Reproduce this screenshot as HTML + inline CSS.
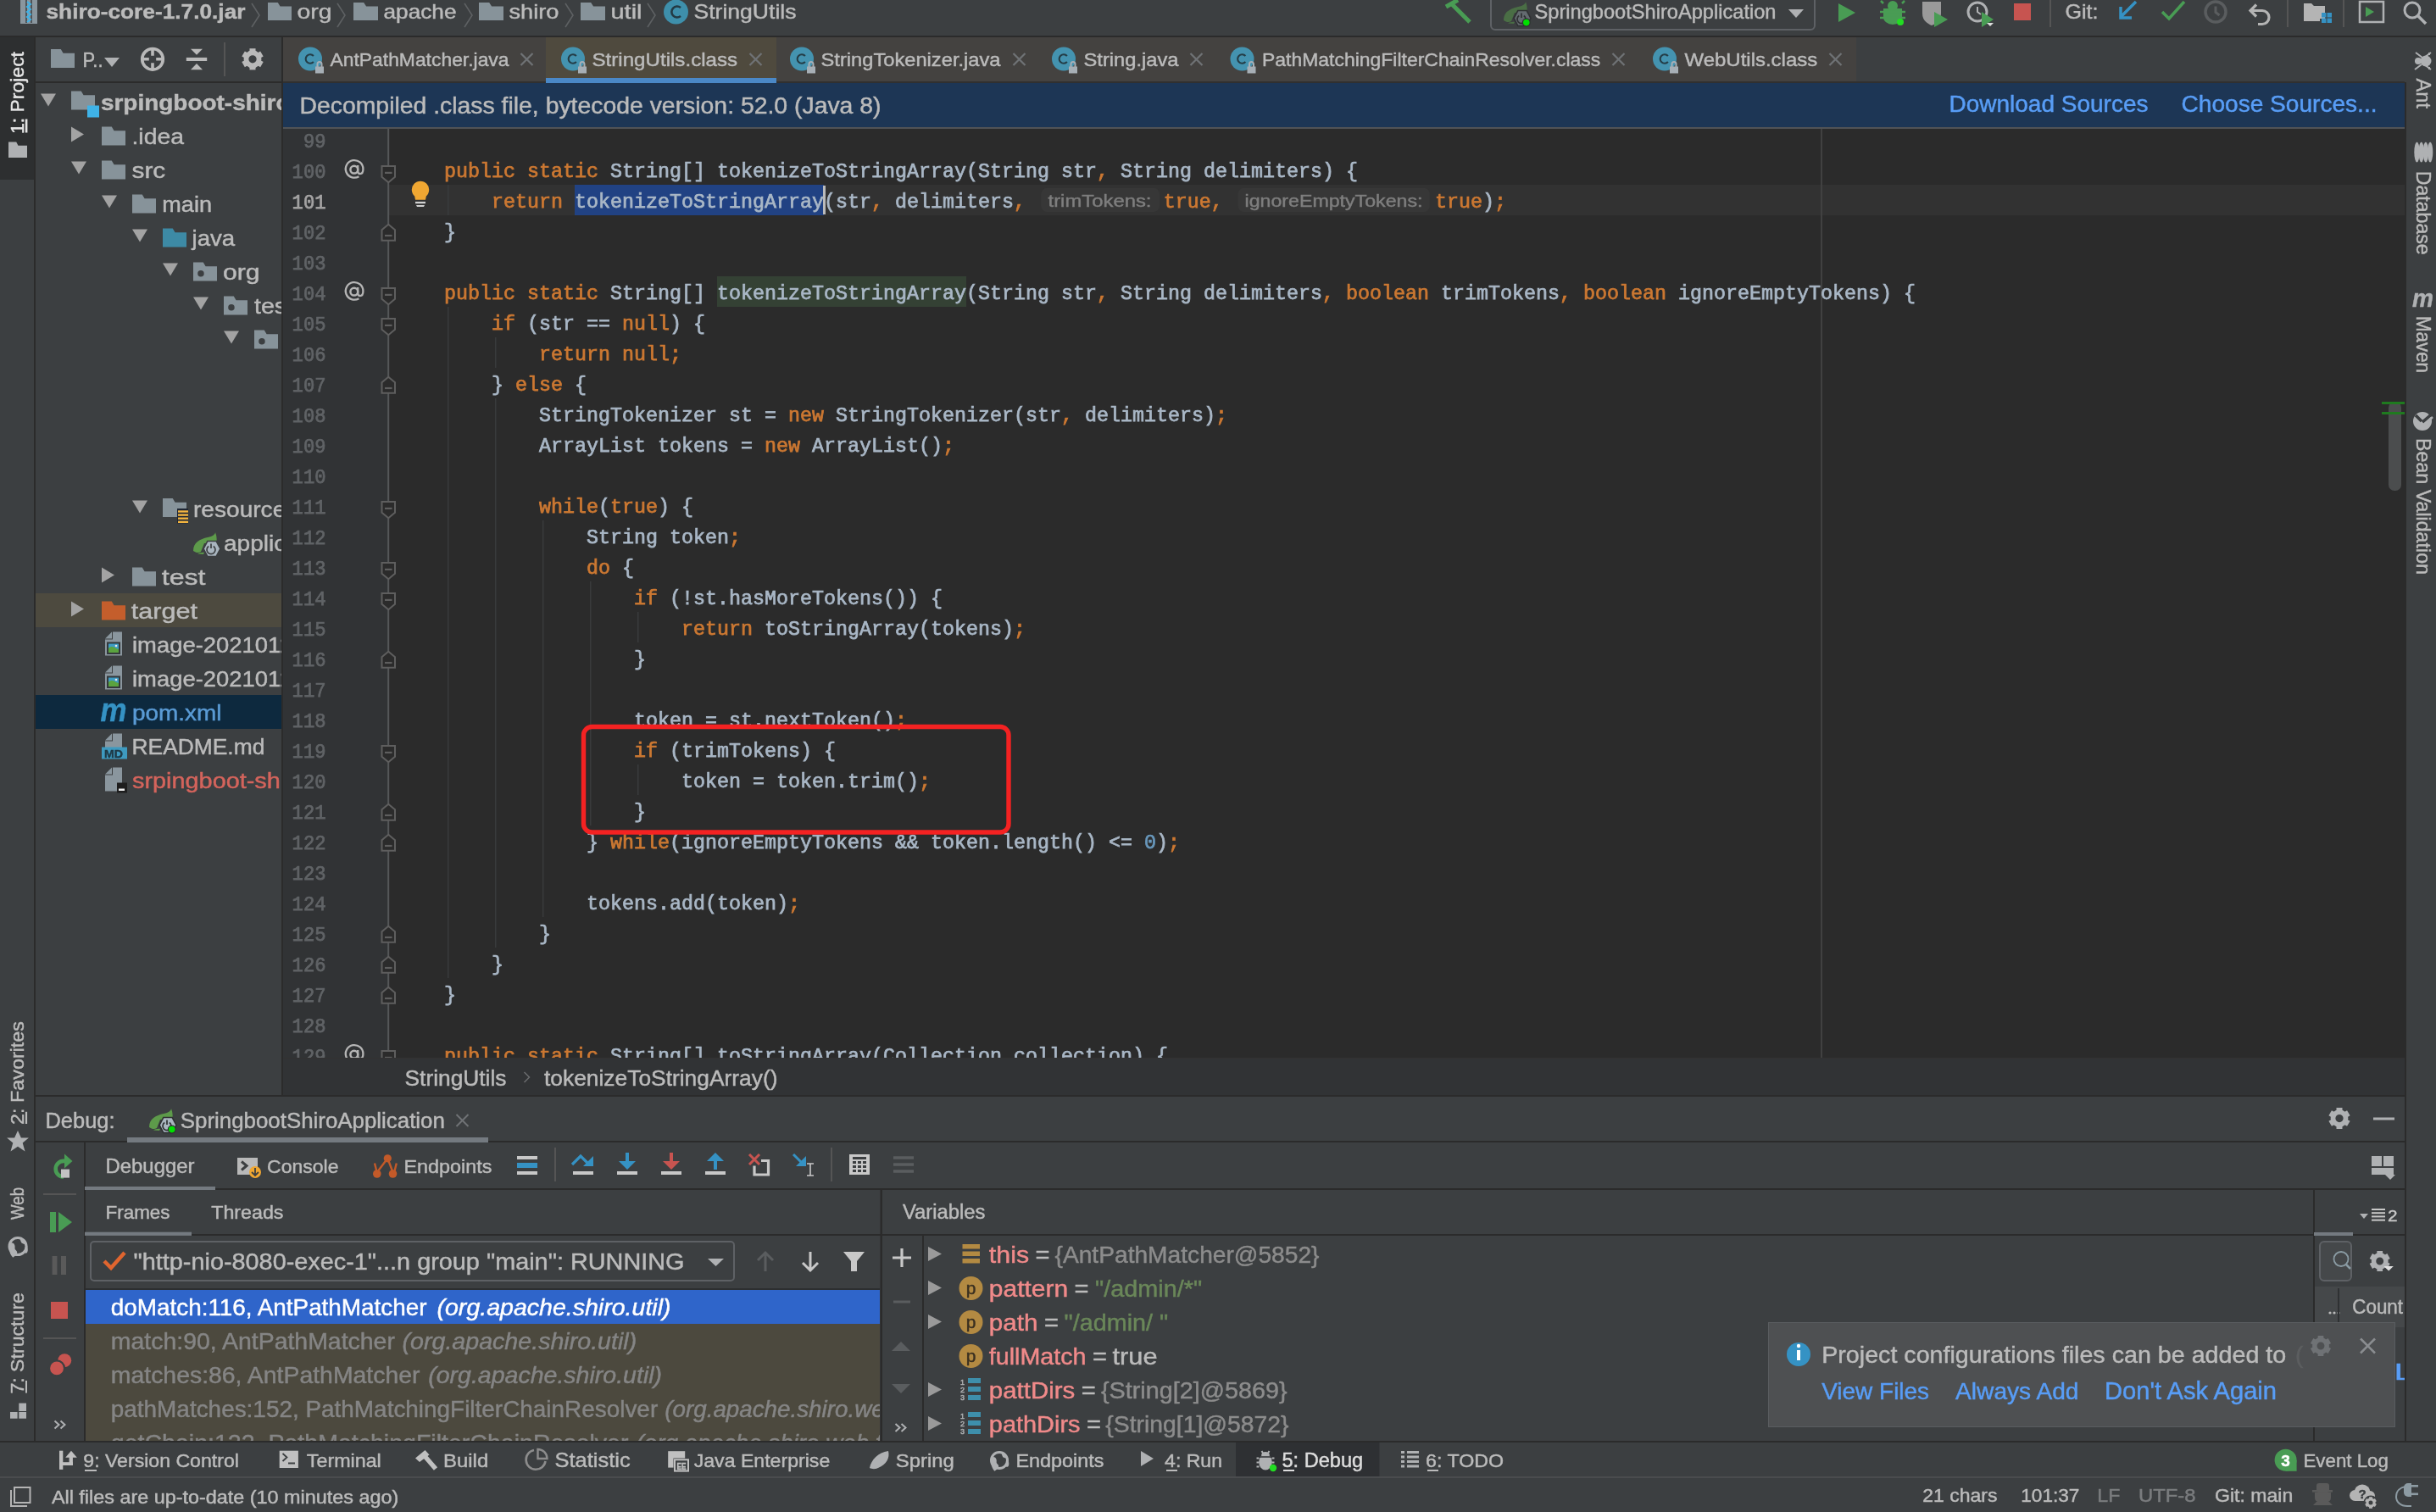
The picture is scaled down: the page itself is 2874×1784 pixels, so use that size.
<!DOCTYPE html><html><head><meta charset="utf-8"><style>html,body{margin:0;padding:0;background:#3c3f41;overflow:hidden}svg text{white-space:pre}</style></head><body><svg width="2874" height="1784" viewBox="0 0 2874 1784" style="display:block;will-change:transform"><rect x="0" y="0" width="2874" height="1784" fill="#3c3f41" />
<rect x="0" y="42" width="2874" height="2" fill="#2b2b2b" />
<rect x="24" y="0" width="20" height="28" fill="#8a969e" />
<path d="M31 0v27M37 0v27" fill="none" stroke="#3c3f41" stroke-width="1.5" />
<path d="M32 2l4 3l-4 3l4 3l-4 3l4 3l-4 3l4 3l-4 3" fill="none" stroke="#3fb3e8" stroke-width="2" />
<text x="54.5" y="22" font-size="24" fill="#bbbbbb" font-family="'Liberation Sans', sans-serif" textLength="235" lengthAdjust="spacingAndGlyphs" font-weight="bold" stroke="#bbbbbb" stroke-width="0.45" >shiro-core-1.7.0.jar</text>
<path d="M297 4l9 14l-9 14" fill="none" stroke="#5e6163" stroke-width="1.6" />
<path d="M316 3h11.76l2.8000000000000003 4.62h13.44v16.38h-28z" fill="#87939a" />
<text x="350.5" y="22" font-size="24" fill="#bbbbbb" font-family="'Liberation Sans', sans-serif" textLength="41" lengthAdjust="spacingAndGlyphs" stroke="#bbbbbb" stroke-width="0.45" >org</text>
<path d="M548 4l9 14l-9 14" fill="none" stroke="#5e6163" stroke-width="1.6" />
<path d="M398 4l9 14l-9 14" fill="none" stroke="#5e6163" stroke-width="1.6" />
<path d="M417 3h12.18l2.9000000000000004 4.62h13.92v16.38h-29z" fill="#87939a" />
<text x="452.5" y="22" font-size="24" fill="#bbbbbb" font-family="'Liberation Sans', sans-serif" textLength="86" lengthAdjust="spacingAndGlyphs" stroke="#bbbbbb" stroke-width="0.45" >apache</text>
<path d="M565 3h12.18l2.9000000000000004 4.62h13.92v16.38h-29z" fill="#87939a" />
<text x="600.5" y="22" font-size="24" fill="#bbbbbb" font-family="'Liberation Sans', sans-serif" textLength="59" lengthAdjust="spacingAndGlyphs" stroke="#bbbbbb" stroke-width="0.45" >shiro</text>
<path d="M667 4l9 14l-9 14" fill="none" stroke="#5e6163" stroke-width="1.6" />
<path d="M685 3h12.18l2.9000000000000004 4.62h13.92v16.38h-29z" fill="#87939a" />
<text x="720.5" y="22" font-size="24" fill="#bbbbbb" font-family="'Liberation Sans', sans-serif" textLength="37" lengthAdjust="spacingAndGlyphs" stroke="#bbbbbb" stroke-width="0.45" >util</text>
<path d="M764 4l9 14l-9 14" fill="none" stroke="#5e6163" stroke-width="1.6" />
<circle cx="797.5" cy="14" r="14.5" fill="#3e8fab" />
<path d="M803 9a6.5 6.5 0 1 0 0 10" fill="none" stroke="#233a44" stroke-width="2.6" />
<text x="818.5" y="22" font-size="24" fill="#bbbbbb" font-family="'Liberation Sans', sans-serif" textLength="121" lengthAdjust="spacingAndGlyphs" stroke="#bbbbbb" stroke-width="0.45" >StringUtils</text>
<path d="M1706 8l14 -8M1712 4l22 22" fill="none" stroke="#499c54" stroke-width="5" />
<rect x="1759" y="-6" width="382" height="41" fill="none" rx="5" stroke="#5e6165" stroke-width="2"/>
<g transform="translate(1598,-1306)">
<path d="M176 1330c0-10 8-14 17-16c6-1 9-4 9-6c2 5 2 10 1 13l-14 0l-4 10c-3 2-6 1-9-1z" fill="#4a6e45" />
<path d="M181 1333.5c2-1 5-2 8-1.5l-1 2z" fill="#4a6e45" />
<path d="M188 1327.5l4.8-9h10.4l4.8 9l-4.8 9h-10.4z" fill="#646b70" stroke="#2f3133" stroke-width="1.6" />
<path d="M194.2 1324.5a5 5 0 1 0 5.6 0" fill="none" stroke="#2f3133" stroke-width="1.7" />
<path d="M197 1321.5v5.5" fill="none" stroke="#2f3133" stroke-width="1.7" />
<circle cx="202.8" cy="1332.6" r="4.4" fill="#00e000" stroke="#2f3133" stroke-width="1.2" />
</g>
<text x="1810.5" y="22" font-size="24" fill="#bbbbbb" font-family="'Liberation Sans', sans-serif" textLength="285" lengthAdjust="spacingAndGlyphs" stroke="#bbbbbb" stroke-width="0.45" >SpringbootShiroApplication</text>
<path d="M2110 11h18l-9 10z" fill="#afb1b3" />
<path d="M2169 4v22l20-11z" fill="#499c54" />
<path d="M2222 10h22v10a11 9 0 0 1 -22 0z" fill="#499c54" />
<circle cx="2233" cy="7" r="6" fill="#499c54" />
<path d="M2218 14h30M2218 21h30M2222 4l-3-3M2244 4l3-3" fill="none" stroke="#499c54" stroke-width="2.5" />
<circle cx="2242" cy="26" r="4" fill="#22dd22" />
<path d="M2268 2h22v14c0 8-6 12-11 14c-5-2-11-6-11-14z" fill="#9a9a9a" />
<path d="M2282 14v18l16-9z" fill="#499c54" />
<circle cx="2333" cy="14" r="11" fill="none" stroke="#afb1b3" stroke-width="3" />
<path d="M2333 8v6l4 3" fill="none" stroke="#afb1b3" stroke-width="2" />
<path d="M2338 14v18l14-9z" fill="#499c54" />
<path d="M2344 27h8l-4 4z" fill="#ddd" />
<rect x="2376" y="4" width="20" height="20" fill="#c75450" />
<rect x="2418" y="0" width="2" height="32" fill="#555" />
<text x="2436.5" y="22" font-size="24" fill="#bbbbbb" font-family="'Liberation Sans', sans-serif" textLength="39" lengthAdjust="spacingAndGlyphs" stroke="#bbbbbb" stroke-width="0.45" >Git:</text>
<path d="M2520 2l-18 18M2502 8v13h13" fill="none" stroke="#3592c4" stroke-width="3.5" />
<path d="M2551 14l8 8l18-20" fill="none" stroke="#499c54" stroke-width="3.5" />
<circle cx="2614" cy="14" r="12" fill="none" stroke="#5a5d5f" stroke-width="3.5" />
<path d="M2614 7.5v7l4.5 3.5" fill="none" stroke="#5a5d5f" stroke-width="3" />
<path d="M2657 12.5h12a8 8 0 0 1 0 16h-5" fill="none" stroke="#b4b4b4" stroke-width="3.2" />
<path d="M2662 5.5l-7 7l7 7" fill="none" stroke="#b4b4b4" stroke-width="3.2" />
<rect x="2698" y="0" width="2" height="32" fill="#555" />
<path d="M2718 4h9l3 3h13v15h-6v3h-19z" fill="#b4b4b4" />
<rect x="2739" y="15" width="5.5" height="5.5" fill="#3592c4" />
<rect x="2745.5" y="15" width="5.5" height="5.5" fill="#3592c4" />
<rect x="2739" y="21.5" width="5.5" height="5.5" fill="#3592c4" />
<rect x="2745.5" y="21.5" width="5.5" height="5.5" fill="#3592c4" />
<rect x="2764" y="0" width="2" height="32" fill="#555" />
<rect x="2784" y="2" width="28" height="24" fill="none" stroke="#afb1b3" stroke-width="2.5"/>
<path d="M2791 8v12l10-6z" fill="#499c54" />
<circle cx="2846" cy="12" r="9" fill="none" stroke="#afb1b3" stroke-width="3" />
<path d="M2853 19l9 9" fill="none" stroke="#afb1b3" stroke-width="3.5" />
<rect x="40" y="43" width="2" height="1657" fill="#2b2b2b" />
<rect x="0" y="44" width="40" height="168" fill="#2d2f30" />
<g transform="translate(20,157) rotate(-90)">
<text x="-1" y="8.1" font-size="22.5" fill="#e6e6e6" font-family="'Liberation Sans', sans-serif" textLength="97" lengthAdjust="spacingAndGlyphs" stroke="#e6e6e6" stroke-width="0.45" >1: Project</text>
</g>
<rect x="29.8" y="140.5" width="2.6" height="16" fill="#e6e6e6" />
<path d="M10 167.6h9.24l2.2 4.048h10.559999999999999v14.351999999999999h-22z" fill="#afb1b3" />
<g transform="translate(20.2,1326) rotate(-90)">
<text x="-1" y="8.1" font-size="22.5" fill="#bbbbbb" font-family="'Liberation Sans', sans-serif" textLength="122" lengthAdjust="spacingAndGlyphs" stroke="#bbbbbb" stroke-width="0.45" >2: Favorites</text>
</g>
<rect x="29.9" y="1311.8" width="2.2" height="14.2" fill="#bbbbbb" />
<path d="M21 1334l3.9 8.6h9l-7.2 5.9l2.8 10l-8.5-5.7l-8.5 5.7l2.8-10l-7.2-5.9h9z" fill="#afb1b3" />
<g transform="translate(20.2,1438) rotate(-90)">
<text x="-1" y="8.1" font-size="22.5" fill="#bbbbbb" font-family="'Liberation Sans', sans-serif" textLength="38" lengthAdjust="spacingAndGlyphs" stroke="#bbbbbb" stroke-width="0.45" >Web</text>
</g>
<circle cx="21" cy="1470.5" r="10.0" fill="none" stroke="#afb1b3" stroke-width="3" />
<path d="M12.375 1466.475c3.4499999999999997 -1.1500000000000001 5.75 2.3000000000000003 5.175 5.75c-0.5750000000000001 3.4499999999999997 4.0249999999999995 2.3000000000000003 2.3000000000000003 8.049999999999999l-4.6000000000000005 3.4499999999999997c-3.4499999999999997 -3.4499999999999997 -5.75 -9.200000000000001 -2.875 -17.25z" fill="#afb1b3" />
<path d="M22.15 1460.725c3.4499999999999997 2.3000000000000003 1.1500000000000001 5.75 5.75 6.8999999999999995c3.4499999999999997 0 3.4499999999999997 5.75 1.1500000000000001 10.35c2.3000000000000003 2.3000000000000003 4.6000000000000005 -1.1500000000000001 3.4499999999999997 -5.75c0 -5.75 -3.4499999999999997 -9.200000000000001 -10.35 -11.5z" fill="#afb1b3" />
<g transform="translate(20.2,1643.6) rotate(-90)">
<text x="-1" y="8.1" font-size="22.5" fill="#bbbbbb" font-family="'Liberation Sans', sans-serif" textLength="119.59999999999991" lengthAdjust="spacingAndGlyphs" stroke="#bbbbbb" stroke-width="0.45" >7: Structure</text>
</g>
<rect x="30" y="1629" width="2" height="14.6" fill="#bbbbbb" />
<rect x="12" y="1666" width="8.6" height="7.7" fill="#afb1b3" />
<rect x="22.3" y="1655.6" width="8.7" height="9.4" fill="#afb1b3" />
<rect x="22.3" y="1666" width="8.7" height="7.7" fill="#afb1b3" />
<rect x="2837" y="43" width="2" height="1657" fill="#2b2b2b" />
<g transform="translate(2860,93.6) rotate(90)">
<text x="-1" y="8.64" font-size="24" fill="#bbbbbb" font-family="'Liberation Sans', sans-serif" textLength="35.400000000000006" lengthAdjust="spacingAndGlyphs" stroke="#bbbbbb" stroke-width="0.45" >Ant</text>
</g>
<g transform="translate(2860,202.7) rotate(90)">
<text x="-1" y="8.64" font-size="24" fill="#bbbbbb" font-family="'Liberation Sans', sans-serif" textLength="99.0" lengthAdjust="spacingAndGlyphs" stroke="#bbbbbb" stroke-width="0.45" >Database</text>
</g>
<g transform="translate(2860,374) rotate(90)">
<text x="-1" y="8.64" font-size="24" fill="#bbbbbb" font-family="'Liberation Sans', sans-serif" textLength="67" lengthAdjust="spacingAndGlyphs" stroke="#bbbbbb" stroke-width="0.45" >Maven</text>
</g>
<g transform="translate(2860,518) rotate(90)">
<text x="-1" y="8.64" font-size="24" fill="#bbbbbb" font-family="'Liberation Sans', sans-serif" textLength="161" lengthAdjust="spacingAndGlyphs" stroke="#bbbbbb" stroke-width="0.45" >Bean Validation</text>
</g>
<circle cx="2862" cy="72" r="6.5" fill="#afb1b3" />
<circle cx="2853" cy="72" r="4" fill="#afb1b3" />
<path d="M2850 62l8 6M2868 62l-8 6M2849 82l8-6M2868 82l-8-6M2866 65v-3M2866 79v3M2855 72h-6" fill="none" stroke="#afb1b3" stroke-width="2" />
<ellipse cx="2851.5" cy="179.5" rx="3.2" ry="12" fill="#afb1b3"/>
<ellipse cx="2856.7" cy="179.5" rx="3.2" ry="12" fill="#afb1b3"/>
<ellipse cx="2861.9" cy="179.5" rx="3.2" ry="12" fill="#afb1b3"/>
<ellipse cx="2867.1" cy="179.5" rx="3.2" ry="12" fill="#afb1b3"/>
<text x="2846" y="361.5" font-size="30" fill="#afb1b3" font-family="'Liberation Sans', sans-serif" textLength="25" lengthAdjust="spacingAndGlyphs" font-weight="bold" font-style="italic" stroke="#afb1b3" stroke-width="0.45" >m</text>
<circle cx="2858" cy="497" r="11" fill="#afb1b3" />
<path d="M2850 490l8 8l14-12" fill="none" stroke="#3c3f41" stroke-width="3.5" />
<path d="M2856 498l4 4l10-10" fill="none" stroke="#afb1b3" stroke-width="2.5" />
<rect x="332" y="43" width="2" height="1250" fill="#2b2b2b" />
<rect x="42" y="96" width="290" height="2" fill="#2b2b2b" />
<path d="M60 58h11.76l2.8000000000000003 4.84h13.44v17.16h-28z" fill="#87939a" />
<text x="97.5" y="79" font-size="24" fill="#bbbbbb" font-family="'Liberation Sans', sans-serif" textLength="24" lengthAdjust="spacingAndGlyphs" stroke="#bbbbbb" stroke-width="0.45" >P..</text>
<path d="M123 68h18l-9 11z" fill="#afb1b3" />
<circle cx="180" cy="69.8" r="12.3" fill="none" stroke="#b9b9b9" stroke-width="3.6" />
<path d="M180 58v7.8M180 74.2v7.8M168 69.8h7.8M184.2 69.8h7.8" fill="none" stroke="#b9b9b9" stroke-width="3.6" />
<rect x="219.8" y="67.9" width="24.4" height="4.1" fill="#b9b9b9" />
<path d="M225 57.8h14l-7 6.9z" fill="#b9b9b9" />
<path d="M225 82.2h14l-7-7.3z" fill="#b9b9b9" />
<rect x="264" y="50" width="2" height="40" fill="#555" />
<circle cx="298" cy="69.8" r="7.56" fill="none" stroke="#b9b9b9" stroke-width="5.796" />
<line x1="298.0" y1="63.5" x2="298.0" y2="57.2" stroke="#b9b9b9" stroke-width="7.056" />
<line x1="303.46" y1="66.65" x2="308.91" y2="63.5" stroke="#b9b9b9" stroke-width="7.056" />
<line x1="303.46" y1="72.95" x2="308.91" y2="76.1" stroke="#b9b9b9" stroke-width="7.056" />
<line x1="298.0" y1="76.1" x2="298.0" y2="82.4" stroke="#b9b9b9" stroke-width="7.056" />
<line x1="292.54" y1="72.95" x2="287.09" y2="76.1" stroke="#b9b9b9" stroke-width="7.056" />
<line x1="292.54" y1="66.65" x2="287.09" y2="63.5" stroke="#b9b9b9" stroke-width="7.056" />
<svg x="42" y="98" width="290" height="1194" overflow="hidden"><g transform="translate(-42,-98)">
<rect x="42" y="700" width="290" height="40" fill="#4d4a3f" />
<rect x="42" y="820" width="290" height="40" fill="#0d293e" />
<path d="M48 110.5h18l-9.0 15z" fill="#a3a3a3" />
<path d="M84 107.5h11.76l2.8000000000000003 4.84h13.44v17.16h-28z" fill="#87939a" />
<rect x="103" y="124.5" width="14" height="14" fill="#3fb3e8" />
<text x="118.9" y="129.5" font-size="26" fill="#bbbbbb" font-family="'Liberation Sans', sans-serif" textLength="223.6" lengthAdjust="spacingAndGlyphs" font-weight="bold" stroke="#bbbbbb" stroke-width="0.45" >srpingboot-shiro</text>
<path d="M84 149.5v18l15 -9.0z" fill="#a3a3a3" />
<path d="M120 149.5h11.76l2.8000000000000003 4.84h13.44v17.16h-28z" fill="#87939a" />
<text x="155.5" y="169.5" font-size="26" fill="#bbbbbb" font-family="'Liberation Sans', sans-serif" textLength="61.4" lengthAdjust="spacingAndGlyphs" stroke="#bbbbbb" stroke-width="0.45" >.idea</text>
<path d="M84 190.5h18l-9.0 15z" fill="#a3a3a3" />
<path d="M120 189.5h11.76l2.8000000000000003 4.84h13.44v17.16h-28z" fill="#87939a" />
<text x="155.5" y="209.5" font-size="26" fill="#bbbbbb" font-family="'Liberation Sans', sans-serif" textLength="39.8" lengthAdjust="spacingAndGlyphs" stroke="#bbbbbb" stroke-width="0.45" >src</text>
<path d="M120 230.5h18l-9.0 15z" fill="#a3a3a3" />
<path d="M156 229.5h11.76l2.8000000000000003 4.84h13.44v17.16h-28z" fill="#87939a" />
<text x="191.3" y="249.5" font-size="26" fill="#bbbbbb" font-family="'Liberation Sans', sans-serif" textLength="58.7" lengthAdjust="spacingAndGlyphs" stroke="#bbbbbb" stroke-width="0.45" >main</text>
<path d="M156 270.5h18l-9.0 15z" fill="#a3a3a3" />
<path d="M192 269.5h11.76l2.8000000000000003 4.84h13.44v17.16h-28z" fill="#3d8aa5" />
<text x="226.5" y="289.5" font-size="26" fill="#bbbbbb" font-family="'Liberation Sans', sans-serif" textLength="50.7" lengthAdjust="spacingAndGlyphs" stroke="#bbbbbb" stroke-width="0.45" >java</text>
<path d="M192 310.5h18l-9.0 15z" fill="#a3a3a3" />
<path d="M228 309.5h11.76l2.8000000000000003 4.84h13.44v17.16h-28z" fill="#87939a" />
<circle cx="236.96" cy="322.7" r="3.74" fill="#3c3f41" />
<text x="262.9" y="329.5" font-size="26" fill="#bbbbbb" font-family="'Liberation Sans', sans-serif" textLength="43.6" lengthAdjust="spacingAndGlyphs" stroke="#bbbbbb" stroke-width="0.45" >org</text>
<path d="M228 350.5h18l-9.0 15z" fill="#a3a3a3" />
<path d="M264 349.5h11.76l2.8000000000000003 4.84h13.44v17.16h-28z" fill="#87939a" />
<circle cx="272.96" cy="362.7" r="3.74" fill="#3c3f41" />
<text x="300" y="369.5" font-size="26" fill="#bbbbbb" font-family="'Liberation Sans', sans-serif" textLength="38.1" lengthAdjust="spacingAndGlyphs" stroke="#bbbbbb" stroke-width="0.45" >tes</text>
<path d="M264 390.5h18l-9.0 15z" fill="#a3a3a3" />
<path d="M300 389.5h11.76l2.8000000000000003 4.84h13.44v17.16h-28z" fill="#87939a" />
<circle cx="308.96" cy="402.7" r="3.74" fill="#3c3f41" />
<path d="M156 590.5h18l-9.0 15z" fill="#a3a3a3" />
<path d="M192 588.0h11.76l2.8000000000000003 4.84h13.44v17.16h-28z" fill="#87939a" />
<rect x="209" y="600.0" width="13" height="17.5" fill="#1f2633" />
<rect x="210" y="602.3" width="12" height="2.4" fill="#f2b440" />
<rect x="210" y="606.4" width="12" height="2.4" fill="#f2b440" />
<rect x="210" y="610.5" width="12" height="2.4" fill="#f2b440" />
<rect x="210" y="614.5999999999999" width="12" height="2.4" fill="#f2b440" />
<text x="228" y="609.5" font-size="26" fill="#bbbbbb" font-family="'Liberation Sans', sans-serif" textLength="123.3" lengthAdjust="spacingAndGlyphs" stroke="#bbbbbb" stroke-width="0.45" >resources</text>
<g transform="translate(52,-680.0)">
<path d="M176 1330c0-10 8-14 17-16c6-1 9-4 9-6c2 5 2 10 1 13l-14 0l-4 10c-3 2-6 1-9-1z" fill="#5d9a4a" />
<path d="M181 1333.5c2-1 5-2 8-1.5l-1 2z" fill="#5d9a4a" />
<path d="M188 1327.5l4.8-9h10.4l4.8 9l-4.8 9h-10.4z" fill="#a9b5bf" stroke="#3c3f41" stroke-width="1.6" />
<path d="M194.2 1324.5a5 5 0 1 0 5.6 0" fill="none" stroke="#3c3f41" stroke-width="1.7" />
<path d="M197 1321.5v5.5" fill="none" stroke="#3c3f41" stroke-width="1.7" />
</g>
<text x="264" y="649.5" font-size="26" fill="#bbbbbb" font-family="'Liberation Sans', sans-serif" textLength="185.7" lengthAdjust="spacingAndGlyphs" stroke="#bbbbbb" stroke-width="0.45" >application.yml</text>
<path d="M120 669.5v18l15 -9.0z" fill="#a3a3a3" />
<path d="M156 669.5h11.76l2.8000000000000003 4.84h13.44v17.16h-28z" fill="#87939a" />
<text x="190.8" y="689.5" font-size="26" fill="#bbbbbb" font-family="'Liberation Sans', sans-serif" textLength="51.7" lengthAdjust="spacingAndGlyphs" stroke="#bbbbbb" stroke-width="0.45" >test</text>
<path d="M84 709.5v18l15 -9.0z" fill="#a3a3a3" />
<path d="M120 709.5h11.76l2.8000000000000003 4.84h13.44v17.16h-28z" fill="#c45e2c" />
<text x="154.8" y="729.5" font-size="26" fill="#bbbbbb" font-family="'Liberation Sans', sans-serif" textLength="78.2" lengthAdjust="spacingAndGlyphs" stroke="#bbbbbb" stroke-width="0.45" >target</text>
<path d="M124 753.5l8-8v8z" fill="#8a969e" />
<path d="M133 745.5h11v28h-20v-19h9z" fill="#8a969e" />
<rect x="126" y="757.5" width="16" height="14.5" fill="#33383b" />
<rect x="128" y="759.5" width="12" height="10.5" fill="#3e9cc4" />
<path d="M128 770.0v-5c3-3 6-2 9 0l3 1v4z" fill="#5aa33f" />
<circle cx="137" cy="762.0" r="1.3" fill="#e8e8e8" />
<text x="156" y="769.5" font-size="26" fill="#bbbbbb" font-family="'Liberation Sans', sans-serif" textLength="201.6" lengthAdjust="spacingAndGlyphs" stroke="#bbbbbb" stroke-width="0.45" >image-20210111</text>
<path d="M124 793.5l8-8v8z" fill="#8a969e" />
<path d="M133 785.5h11v28h-20v-19h9z" fill="#8a969e" />
<rect x="126" y="797.5" width="16" height="14.5" fill="#33383b" />
<rect x="128" y="799.5" width="12" height="10.5" fill="#3e9cc4" />
<path d="M128 810.0v-5c3-3 6-2 9 0l3 1v4z" fill="#5aa33f" />
<circle cx="137" cy="802.0" r="1.3" fill="#e8e8e8" />
<text x="156" y="809.5" font-size="26" fill="#bbbbbb" font-family="'Liberation Sans', sans-serif" textLength="201.6" lengthAdjust="spacingAndGlyphs" stroke="#bbbbbb" stroke-width="0.45" >image-20210111</text>
<text x="118.5" y="850.5" font-size="38" fill="#3592c4" font-family="'Liberation Sans', sans-serif" textLength="31" lengthAdjust="spacingAndGlyphs" font-weight="bold" font-style="italic" stroke="#3592c4" stroke-width="0.45" >m</text>
<text x="155.9" y="849.5" font-size="26" fill="#5a9bd5" font-family="'Liberation Sans', sans-serif" textLength="105.6" lengthAdjust="spacingAndGlyphs" stroke="#5a9bd5" stroke-width="0.45" >pom.xml</text>
<path d="M124 873.5l8-8v8z" fill="#8a969e" />
<path d="M133 865.5h11v20h-20v-11h9z" fill="#8a969e" />
<rect x="120" y="881.5" width="30" height="14" fill="#3e9ac0" />
<text x="123" y="893.5" font-size="13.5" fill="#1f3a47" font-family="'Liberation Sans', sans-serif" textLength="22" lengthAdjust="spacingAndGlyphs" font-weight="bold" stroke="#1f3a47" stroke-width="0.45" >MD</text>
<text x="155.5" y="889.5" font-size="26" fill="#bbbbbb" font-family="'Liberation Sans', sans-serif" textLength="156.8" lengthAdjust="spacingAndGlyphs" stroke="#bbbbbb" stroke-width="0.45" >README.md</text>
<path d="M124 913.5l8-8v8z" fill="#8a969e" />
<path d="M133 905.5h11v28h-20v-19h9z" fill="#8a969e" />
<rect x="138" y="923.5" width="12" height="12" fill="#1e1e1e" />
<rect x="140" y="930.5" width="7" height="2.5" fill="#eeeeee" />
<text x="156" y="929.5" font-size="26" fill="#d4645c" font-family="'Liberation Sans', sans-serif" textLength="251.8" lengthAdjust="spacingAndGlyphs" stroke="#d4645c" stroke-width="0.45" >srpingboot-shiro.iml</text>
</g></svg>
<rect x="334" y="44" width="2505" height="53" fill="#3c3f41" />
<rect x="334" y="44" width="1856" height="53" fill="#444240" />
<rect x="644" y="44" width="272" height="53" fill="#4f4a3e" />
<rect x="334" y="96" width="2503" height="2" fill="#303030" />
<rect x="644" y="92" width="272" height="6" fill="#4a88c7" />
<circle cx="366.0" cy="69.5" r="14.0" fill="#4493b0" />
<path d="M369.9 65.95a5.3 5.3 0 1 0 0 7.1" fill="none" stroke="#243d47" stroke-width="2.1" />
<rect x="372" y="78.5" width="10" height="8" fill="#a7afb6" />
<path d="M374.5 79.0v-3.5a2.5 2.5 0 0 1 5 0v3.5" fill="none" stroke="#a7afb6" stroke-width="2" />
<text x="389.5" y="78" font-size="22.5" fill="#bbbbbb" font-family="'Liberation Sans', sans-serif" textLength="211" lengthAdjust="spacingAndGlyphs" stroke="#bbbbbb" stroke-width="0.45" >AntPathMatcher.java</text>
<path d="M614.5 63L628.5 77M628.5 63L614.5 77" fill="none" stroke="#6f7275" stroke-width="2.2" />
<circle cx="676.0" cy="69.5" r="14.0" fill="#4493b0" />
<path d="M679.9 65.95a5.3 5.3 0 1 0 0 7.1" fill="none" stroke="#243d47" stroke-width="2.1" />
<rect x="682" y="78.5" width="10" height="8" fill="#a7afb6" />
<path d="M684.5 79.0v-3.5a2.5 2.5 0 0 1 5 0v3.5" fill="none" stroke="#a7afb6" stroke-width="2" />
<text x="698.5" y="78" font-size="22.5" fill="#bbbbbb" font-family="'Liberation Sans', sans-serif" textLength="171.6" lengthAdjust="spacingAndGlyphs" stroke="#bbbbbb" stroke-width="0.45" >StringUtils.class</text>
<path d="M884.5 63L898.5 77M898.5 63L884.5 77" fill="none" stroke="#6f7275" stroke-width="2.2" />
<circle cx="946.0" cy="69.5" r="14.0" fill="#4493b0" />
<path d="M949.9 65.95a5.3 5.3 0 1 0 0 7.1" fill="none" stroke="#243d47" stroke-width="2.1" />
<rect x="952" y="78.5" width="10" height="8" fill="#a7afb6" />
<path d="M954.5 79.0v-3.5a2.5 2.5 0 0 1 5 0v3.5" fill="none" stroke="#a7afb6" stroke-width="2" />
<text x="968.5" y="78" font-size="22.5" fill="#bbbbbb" font-family="'Liberation Sans', sans-serif" textLength="212" lengthAdjust="spacingAndGlyphs" stroke="#bbbbbb" stroke-width="0.45" >StringTokenizer.java</text>
<path d="M1195.5 63L1209.5 77M1209.5 63L1195.5 77" fill="none" stroke="#6f7275" stroke-width="2.2" />
<circle cx="1255.0" cy="69.5" r="14.0" fill="#4493b0" />
<path d="M1258.9 65.95a5.3 5.3 0 1 0 0 7.1" fill="none" stroke="#243d47" stroke-width="2.1" />
<rect x="1261" y="78.5" width="10" height="8" fill="#a7afb6" />
<path d="M1263.5 79.0v-3.5a2.5 2.5 0 0 1 5 0v3.5" fill="none" stroke="#a7afb6" stroke-width="2" />
<text x="1278.5" y="78" font-size="22.5" fill="#bbbbbb" font-family="'Liberation Sans', sans-serif" textLength="112" lengthAdjust="spacingAndGlyphs" stroke="#bbbbbb" stroke-width="0.45" >String.java</text>
<path d="M1404.5 63L1418.5 77M1418.5 63L1404.5 77" fill="none" stroke="#6f7275" stroke-width="2.2" />
<circle cx="1465.5" cy="69.5" r="14.0" fill="#4493b0" />
<path d="M1469.4 65.95a5.3 5.3 0 1 0 0 7.1" fill="none" stroke="#243d47" stroke-width="2.1" />
<rect x="1471.5" y="78.5" width="10" height="8" fill="#a7afb6" />
<path d="M1474.0 79.0v-3.5a2.5 2.5 0 0 1 5 0v3.5" fill="none" stroke="#a7afb6" stroke-width="2" />
<text x="1489.0" y="78" font-size="22.5" fill="#bbbbbb" font-family="'Liberation Sans', sans-serif" textLength="399.2" lengthAdjust="spacingAndGlyphs" stroke="#bbbbbb" stroke-width="0.45" >PathMatchingFilterChainResolver.class</text>
<path d="M1902.5 63L1916.5 77M1916.5 63L1902.5 77" fill="none" stroke="#6f7275" stroke-width="2.2" />
<circle cx="1964.0" cy="69.5" r="14.0" fill="#4493b0" />
<path d="M1967.9 65.95a5.3 5.3 0 1 0 0 7.1" fill="none" stroke="#243d47" stroke-width="2.1" />
<rect x="1970" y="78.5" width="10" height="8" fill="#a7afb6" />
<path d="M1972.5 79.0v-3.5a2.5 2.5 0 0 1 5 0v3.5" fill="none" stroke="#a7afb6" stroke-width="2" />
<text x="1987.5" y="78" font-size="22.5" fill="#bbbbbb" font-family="'Liberation Sans', sans-serif" textLength="156.7" lengthAdjust="spacingAndGlyphs" stroke="#bbbbbb" stroke-width="0.45" >WebUtils.class</text>
<path d="M2158.5 63L2172.5 77M2172.5 63L2158.5 77" fill="none" stroke="#6f7275" stroke-width="2.2" />
<rect x="334" y="98" width="2503" height="52" fill="#1d3655" />
<rect x="334" y="150" width="2503" height="2" fill="#505356" />
<text x="353.5" y="133.8" font-size="27" fill="#bbbbbb" font-family="'Liberation Sans', sans-serif" textLength="686" lengthAdjust="spacingAndGlyphs" stroke="#bbbbbb" stroke-width="0.45" >Decompiled .class file, bytecode version: 52.0 (Java 8)</text>
<text x="2299.5" y="132" font-size="27" fill="#589df6" font-family="'Liberation Sans', sans-serif" textLength="235" lengthAdjust="spacingAndGlyphs" stroke="#589df6" stroke-width="0.45" >Download Sources</text>
<text x="2573.5" y="132" font-size="27" fill="#589df6" font-family="'Liberation Sans', sans-serif" textLength="231" lengthAdjust="spacingAndGlyphs" stroke="#589df6" stroke-width="0.45" >Choose Sources...</text>
<svg x="334" y="152" width="2503" height="1096" overflow="hidden"><g transform="translate(-334,-152)">
<rect x="334" y="152" width="125" height="1096" fill="#313335" />
<rect x="459" y="152" width="2378" height="1096" fill="#2b2b2b" />
<rect x="459" y="218" width="2378" height="36" fill="#323232" />
<rect x="2148" y="152" width="2" height="1096" fill="#414141" />
<rect x="457.2" y="152" width="2" height="1096" fill="#555759" />
<rect x="678" y="218" width="294" height="36" fill="#214283" />
<rect x="846" y="326" width="294" height="36" fill="#344134" />
<rect x="528" y="218" width="1.5" height="36" fill="#393b3c" />
<rect x="528" y="362" width="1.5" height="792" fill="#393b3c" />
<rect x="584" y="398" width="1.5" height="36" fill="#393b3c" />
<rect x="584" y="470" width="1.5" height="648" fill="#393b3c" />
<rect x="640" y="614" width="1.5" height="468" fill="#393b3c" />
<rect x="696" y="686" width="1.5" height="288" fill="#393b3c" />
<rect x="752" y="722" width="1.5" height="36" fill="#393b3c" />
<rect x="752" y="902" width="1.5" height="36" fill="#393b3c" />
<text x="524" y="209" font-size="24" fill="#cc7832" font-family="'Liberation Mono', monospace" textLength="182" lengthAdjust="spacingAndGlyphs" stroke="#cc7832" stroke-width="0.75" xml:space="preserve">public static</text>
<text x="720" y="209" font-size="24" fill="#a9b7c6" font-family="'Liberation Mono', monospace" textLength="574" lengthAdjust="spacingAndGlyphs" stroke="#a9b7c6" stroke-width="0.75" xml:space="preserve">String[] tokenizeToStringArray(String str</text>
<text x="1294" y="209" font-size="24" fill="#cc7832" font-family="'Liberation Mono', monospace" textLength="14" lengthAdjust="spacingAndGlyphs" stroke="#cc7832" stroke-width="0.75" xml:space="preserve">,</text>
<text x="1322" y="209" font-size="24" fill="#a9b7c6" font-family="'Liberation Mono', monospace" textLength="280" lengthAdjust="spacingAndGlyphs" stroke="#a9b7c6" stroke-width="0.75" xml:space="preserve">String delimiters) {</text>
<text x="580" y="245" font-size="24" fill="#cc7832" font-family="'Liberation Mono', monospace" textLength="84" lengthAdjust="spacingAndGlyphs" stroke="#cc7832" stroke-width="0.75" xml:space="preserve">return</text>
<text x="678" y="245" font-size="24" fill="#a9b7c6" font-family="'Liberation Mono', monospace" textLength="350" lengthAdjust="spacingAndGlyphs" stroke="#a9b7c6" stroke-width="0.75" xml:space="preserve">tokenizeToStringArray(str</text>
<text x="1028" y="245" font-size="24" fill="#cc7832" font-family="'Liberation Mono', monospace" textLength="14" lengthAdjust="spacingAndGlyphs" stroke="#cc7832" stroke-width="0.75" xml:space="preserve">,</text>
<text x="1056" y="245" font-size="24" fill="#a9b7c6" font-family="'Liberation Mono', monospace" textLength="140" lengthAdjust="spacingAndGlyphs" stroke="#a9b7c6" stroke-width="0.75" xml:space="preserve">delimiters</text>
<text x="1196" y="245" font-size="24" fill="#cc7832" font-family="'Liberation Mono', monospace" textLength="14" lengthAdjust="spacingAndGlyphs" stroke="#cc7832" stroke-width="0.75" xml:space="preserve">,</text>
<text x="524" y="281" font-size="24" fill="#a9b7c6" font-family="'Liberation Mono', monospace" textLength="14" lengthAdjust="spacingAndGlyphs" stroke="#a9b7c6" stroke-width="0.75" xml:space="preserve">}</text>
<text x="524" y="353" font-size="24" fill="#cc7832" font-family="'Liberation Mono', monospace" textLength="182" lengthAdjust="spacingAndGlyphs" stroke="#cc7832" stroke-width="0.75" xml:space="preserve">public static</text>
<text x="720" y="353" font-size="24" fill="#a9b7c6" font-family="'Liberation Mono', monospace" textLength="574" lengthAdjust="spacingAndGlyphs" stroke="#a9b7c6" stroke-width="0.75" xml:space="preserve">String[] tokenizeToStringArray(String str</text>
<text x="1294" y="353" font-size="24" fill="#cc7832" font-family="'Liberation Mono', monospace" textLength="14" lengthAdjust="spacingAndGlyphs" stroke="#cc7832" stroke-width="0.75" xml:space="preserve">,</text>
<text x="1322" y="353" font-size="24" fill="#a9b7c6" font-family="'Liberation Mono', monospace" textLength="238" lengthAdjust="spacingAndGlyphs" stroke="#a9b7c6" stroke-width="0.75" xml:space="preserve">String delimiters</text>
<text x="1560" y="353" font-size="24" fill="#cc7832" font-family="'Liberation Mono', monospace" textLength="14" lengthAdjust="spacingAndGlyphs" stroke="#cc7832" stroke-width="0.75" xml:space="preserve">,</text>
<text x="1588" y="353" font-size="24" fill="#cc7832" font-family="'Liberation Mono', monospace" textLength="98" lengthAdjust="spacingAndGlyphs" stroke="#cc7832" stroke-width="0.75" xml:space="preserve">boolean</text>
<text x="1700" y="353" font-size="24" fill="#a9b7c6" font-family="'Liberation Mono', monospace" textLength="140" lengthAdjust="spacingAndGlyphs" stroke="#a9b7c6" stroke-width="0.75" xml:space="preserve">trimTokens</text>
<text x="1840" y="353" font-size="24" fill="#cc7832" font-family="'Liberation Mono', monospace" textLength="14" lengthAdjust="spacingAndGlyphs" stroke="#cc7832" stroke-width="0.75" xml:space="preserve">,</text>
<text x="1868" y="353" font-size="24" fill="#cc7832" font-family="'Liberation Mono', monospace" textLength="98" lengthAdjust="spacingAndGlyphs" stroke="#cc7832" stroke-width="0.75" xml:space="preserve">boolean</text>
<text x="1980" y="353" font-size="24" fill="#a9b7c6" font-family="'Liberation Mono', monospace" textLength="280" lengthAdjust="spacingAndGlyphs" stroke="#a9b7c6" stroke-width="0.75" xml:space="preserve">ignoreEmptyTokens) {</text>
<text x="580" y="389" font-size="24" fill="#cc7832" font-family="'Liberation Mono', monospace" textLength="28" lengthAdjust="spacingAndGlyphs" stroke="#cc7832" stroke-width="0.75" xml:space="preserve">if</text>
<text x="622" y="389" font-size="24" fill="#a9b7c6" font-family="'Liberation Mono', monospace" textLength="112" lengthAdjust="spacingAndGlyphs" stroke="#a9b7c6" stroke-width="0.75" xml:space="preserve">(str == </text>
<text x="734" y="389" font-size="24" fill="#cc7832" font-family="'Liberation Mono', monospace" textLength="56" lengthAdjust="spacingAndGlyphs" stroke="#cc7832" stroke-width="0.75" xml:space="preserve">null</text>
<text x="790" y="389" font-size="24" fill="#a9b7c6" font-family="'Liberation Mono', monospace" textLength="42" lengthAdjust="spacingAndGlyphs" stroke="#a9b7c6" stroke-width="0.75" xml:space="preserve">) {</text>
<text x="636" y="425" font-size="24" fill="#cc7832" font-family="'Liberation Mono', monospace" textLength="168" lengthAdjust="spacingAndGlyphs" stroke="#cc7832" stroke-width="0.75" xml:space="preserve">return null;</text>
<text x="580" y="461" font-size="24" fill="#a9b7c6" font-family="'Liberation Mono', monospace" textLength="14" lengthAdjust="spacingAndGlyphs" stroke="#a9b7c6" stroke-width="0.75" xml:space="preserve">}</text>
<text x="608" y="461" font-size="24" fill="#cc7832" font-family="'Liberation Mono', monospace" textLength="56" lengthAdjust="spacingAndGlyphs" stroke="#cc7832" stroke-width="0.75" xml:space="preserve">else</text>
<text x="678" y="461" font-size="24" fill="#a9b7c6" font-family="'Liberation Mono', monospace" textLength="14" lengthAdjust="spacingAndGlyphs" stroke="#a9b7c6" stroke-width="0.75" xml:space="preserve">{</text>
<text x="636" y="497" font-size="24" fill="#a9b7c6" font-family="'Liberation Mono', monospace" textLength="294" lengthAdjust="spacingAndGlyphs" stroke="#a9b7c6" stroke-width="0.75" xml:space="preserve">StringTokenizer st = </text>
<text x="930" y="497" font-size="24" fill="#cc7832" font-family="'Liberation Mono', monospace" textLength="42" lengthAdjust="spacingAndGlyphs" stroke="#cc7832" stroke-width="0.75" xml:space="preserve">new</text>
<text x="986" y="497" font-size="24" fill="#a9b7c6" font-family="'Liberation Mono', monospace" textLength="266" lengthAdjust="spacingAndGlyphs" stroke="#a9b7c6" stroke-width="0.75" xml:space="preserve">StringTokenizer(str</text>
<text x="1252" y="497" font-size="24" fill="#cc7832" font-family="'Liberation Mono', monospace" textLength="14" lengthAdjust="spacingAndGlyphs" stroke="#cc7832" stroke-width="0.75" xml:space="preserve">,</text>
<text x="1280" y="497" font-size="24" fill="#a9b7c6" font-family="'Liberation Mono', monospace" textLength="154" lengthAdjust="spacingAndGlyphs" stroke="#a9b7c6" stroke-width="0.75" xml:space="preserve">delimiters)</text>
<text x="1434" y="497" font-size="24" fill="#cc7832" font-family="'Liberation Mono', monospace" textLength="14" lengthAdjust="spacingAndGlyphs" stroke="#cc7832" stroke-width="0.75" xml:space="preserve">;</text>
<text x="636" y="533" font-size="24" fill="#a9b7c6" font-family="'Liberation Mono', monospace" textLength="266" lengthAdjust="spacingAndGlyphs" stroke="#a9b7c6" stroke-width="0.75" xml:space="preserve">ArrayList tokens = </text>
<text x="902" y="533" font-size="24" fill="#cc7832" font-family="'Liberation Mono', monospace" textLength="42" lengthAdjust="spacingAndGlyphs" stroke="#cc7832" stroke-width="0.75" xml:space="preserve">new</text>
<text x="958" y="533" font-size="24" fill="#a9b7c6" font-family="'Liberation Mono', monospace" textLength="154" lengthAdjust="spacingAndGlyphs" stroke="#a9b7c6" stroke-width="0.75" xml:space="preserve">ArrayList()</text>
<text x="1112" y="533" font-size="24" fill="#cc7832" font-family="'Liberation Mono', monospace" textLength="14" lengthAdjust="spacingAndGlyphs" stroke="#cc7832" stroke-width="0.75" xml:space="preserve">;</text>
<text x="636" y="605" font-size="24" fill="#cc7832" font-family="'Liberation Mono', monospace" textLength="70" lengthAdjust="spacingAndGlyphs" stroke="#cc7832" stroke-width="0.75" xml:space="preserve">while</text>
<text x="706" y="605" font-size="24" fill="#a9b7c6" font-family="'Liberation Mono', monospace" textLength="14" lengthAdjust="spacingAndGlyphs" stroke="#a9b7c6" stroke-width="0.75" xml:space="preserve">(</text>
<text x="720" y="605" font-size="24" fill="#cc7832" font-family="'Liberation Mono', monospace" textLength="56" lengthAdjust="spacingAndGlyphs" stroke="#cc7832" stroke-width="0.75" xml:space="preserve">true</text>
<text x="776" y="605" font-size="24" fill="#a9b7c6" font-family="'Liberation Mono', monospace" textLength="42" lengthAdjust="spacingAndGlyphs" stroke="#a9b7c6" stroke-width="0.75" xml:space="preserve">) {</text>
<text x="692" y="641" font-size="24" fill="#a9b7c6" font-family="'Liberation Mono', monospace" textLength="168" lengthAdjust="spacingAndGlyphs" stroke="#a9b7c6" stroke-width="0.75" xml:space="preserve">String token</text>
<text x="860" y="641" font-size="24" fill="#cc7832" font-family="'Liberation Mono', monospace" textLength="14" lengthAdjust="spacingAndGlyphs" stroke="#cc7832" stroke-width="0.75" xml:space="preserve">;</text>
<text x="692" y="677" font-size="24" fill="#cc7832" font-family="'Liberation Mono', monospace" textLength="28" lengthAdjust="spacingAndGlyphs" stroke="#cc7832" stroke-width="0.75" xml:space="preserve">do</text>
<text x="734" y="677" font-size="24" fill="#a9b7c6" font-family="'Liberation Mono', monospace" textLength="14" lengthAdjust="spacingAndGlyphs" stroke="#a9b7c6" stroke-width="0.75" xml:space="preserve">{</text>
<text x="748" y="713" font-size="24" fill="#cc7832" font-family="'Liberation Mono', monospace" textLength="28" lengthAdjust="spacingAndGlyphs" stroke="#cc7832" stroke-width="0.75" xml:space="preserve">if</text>
<text x="790" y="713" font-size="24" fill="#a9b7c6" font-family="'Liberation Mono', monospace" textLength="322" lengthAdjust="spacingAndGlyphs" stroke="#a9b7c6" stroke-width="0.75" xml:space="preserve">(!st.hasMoreTokens()) {</text>
<text x="804" y="749" font-size="24" fill="#cc7832" font-family="'Liberation Mono', monospace" textLength="84" lengthAdjust="spacingAndGlyphs" stroke="#cc7832" stroke-width="0.75" xml:space="preserve">return</text>
<text x="902" y="749" font-size="24" fill="#a9b7c6" font-family="'Liberation Mono', monospace" textLength="294" lengthAdjust="spacingAndGlyphs" stroke="#a9b7c6" stroke-width="0.75" xml:space="preserve">toStringArray(tokens)</text>
<text x="1196" y="749" font-size="24" fill="#cc7832" font-family="'Liberation Mono', monospace" textLength="14" lengthAdjust="spacingAndGlyphs" stroke="#cc7832" stroke-width="0.75" xml:space="preserve">;</text>
<text x="748" y="785" font-size="24" fill="#a9b7c6" font-family="'Liberation Mono', monospace" textLength="14" lengthAdjust="spacingAndGlyphs" stroke="#a9b7c6" stroke-width="0.75" xml:space="preserve">}</text>
<text x="748" y="857" font-size="24" fill="#a9b7c6" font-family="'Liberation Mono', monospace" textLength="308" lengthAdjust="spacingAndGlyphs" stroke="#a9b7c6" stroke-width="0.75" xml:space="preserve">token = st.nextToken()</text>
<text x="1056" y="857" font-size="24" fill="#cc7832" font-family="'Liberation Mono', monospace" textLength="14" lengthAdjust="spacingAndGlyphs" stroke="#cc7832" stroke-width="0.75" xml:space="preserve">;</text>
<text x="748" y="893" font-size="24" fill="#cc7832" font-family="'Liberation Mono', monospace" textLength="28" lengthAdjust="spacingAndGlyphs" stroke="#cc7832" stroke-width="0.75" xml:space="preserve">if</text>
<text x="790" y="893" font-size="24" fill="#a9b7c6" font-family="'Liberation Mono', monospace" textLength="196" lengthAdjust="spacingAndGlyphs" stroke="#a9b7c6" stroke-width="0.75" xml:space="preserve">(trimTokens) {</text>
<text x="804" y="929" font-size="24" fill="#a9b7c6" font-family="'Liberation Mono', monospace" textLength="280" lengthAdjust="spacingAndGlyphs" stroke="#a9b7c6" stroke-width="0.75" xml:space="preserve">token = token.trim()</text>
<text x="1084" y="929" font-size="24" fill="#cc7832" font-family="'Liberation Mono', monospace" textLength="14" lengthAdjust="spacingAndGlyphs" stroke="#cc7832" stroke-width="0.75" xml:space="preserve">;</text>
<text x="748" y="965" font-size="24" fill="#a9b7c6" font-family="'Liberation Mono', monospace" textLength="14" lengthAdjust="spacingAndGlyphs" stroke="#a9b7c6" stroke-width="0.75" xml:space="preserve">}</text>
<text x="692" y="1001" font-size="24" fill="#a9b7c6" font-family="'Liberation Mono', monospace" textLength="28" lengthAdjust="spacingAndGlyphs" stroke="#a9b7c6" stroke-width="0.75" xml:space="preserve">} </text>
<text x="720" y="1001" font-size="24" fill="#cc7832" font-family="'Liberation Mono', monospace" textLength="70" lengthAdjust="spacingAndGlyphs" stroke="#cc7832" stroke-width="0.75" xml:space="preserve">while</text>
<text x="790" y="1001" font-size="24" fill="#a9b7c6" font-family="'Liberation Mono', monospace" textLength="560" lengthAdjust="spacingAndGlyphs" stroke="#a9b7c6" stroke-width="0.75" xml:space="preserve">(ignoreEmptyTokens &amp;&amp; token.length() &lt;= </text>
<text x="1350" y="1001" font-size="24" fill="#6897bb" font-family="'Liberation Mono', monospace" textLength="14" lengthAdjust="spacingAndGlyphs" stroke="#6897bb" stroke-width="0.75" xml:space="preserve">0</text>
<text x="1364" y="1001" font-size="24" fill="#a9b7c6" font-family="'Liberation Mono', monospace" textLength="14" lengthAdjust="spacingAndGlyphs" stroke="#a9b7c6" stroke-width="0.75" xml:space="preserve">)</text>
<text x="1378" y="1001" font-size="24" fill="#cc7832" font-family="'Liberation Mono', monospace" textLength="14" lengthAdjust="spacingAndGlyphs" stroke="#cc7832" stroke-width="0.75" xml:space="preserve">;</text>
<text x="692" y="1073" font-size="24" fill="#a9b7c6" font-family="'Liberation Mono', monospace" textLength="238" lengthAdjust="spacingAndGlyphs" stroke="#a9b7c6" stroke-width="0.75" xml:space="preserve">tokens.add(token)</text>
<text x="930" y="1073" font-size="24" fill="#cc7832" font-family="'Liberation Mono', monospace" textLength="14" lengthAdjust="spacingAndGlyphs" stroke="#cc7832" stroke-width="0.75" xml:space="preserve">;</text>
<text x="636" y="1109" font-size="24" fill="#a9b7c6" font-family="'Liberation Mono', monospace" textLength="14" lengthAdjust="spacingAndGlyphs" stroke="#a9b7c6" stroke-width="0.75" xml:space="preserve">}</text>
<text x="580" y="1145" font-size="24" fill="#a9b7c6" font-family="'Liberation Mono', monospace" textLength="14" lengthAdjust="spacingAndGlyphs" stroke="#a9b7c6" stroke-width="0.75" xml:space="preserve">}</text>
<text x="524" y="1181" font-size="24" fill="#a9b7c6" font-family="'Liberation Mono', monospace" textLength="14" lengthAdjust="spacingAndGlyphs" stroke="#a9b7c6" stroke-width="0.75" xml:space="preserve">}</text>
<text x="524" y="1253" font-size="24" fill="#cc7832" font-family="'Liberation Mono', monospace" textLength="182" lengthAdjust="spacingAndGlyphs" stroke="#cc7832" stroke-width="0.75" xml:space="preserve">public static</text>
<text x="720" y="1253" font-size="24" fill="#a9b7c6" font-family="'Liberation Mono', monospace" textLength="658" lengthAdjust="spacingAndGlyphs" stroke="#a9b7c6" stroke-width="0.75" xml:space="preserve">String[] toStringArray(Collection collection) {</text>
<rect x="1228.4" y="221.8" width="139.6" height="28.2" fill="#373737" rx="7" />
<text x="1236.5" y="243.7" font-size="21" fill="#7e7e7e" font-family="'Liberation Sans', sans-serif" textLength="122" lengthAdjust="spacingAndGlyphs" stroke="#7e7e7e" stroke-width="0.45" >trimTokens:</text>
<text x="1372.7" y="245" font-size="24" fill="#cc7832" font-family="'Liberation Mono', monospace" textLength="56" lengthAdjust="spacingAndGlyphs" stroke="#cc7832" stroke-width="0.75" >true</text>
<text x="1428.7" y="245" font-size="24" fill="#cc7832" font-family="'Liberation Mono', monospace" textLength="14" lengthAdjust="spacingAndGlyphs" stroke="#cc7832" stroke-width="0.75" >,</text>
<rect x="1460.6" y="221.8" width="226.2" height="28.2" fill="#373737" rx="7" />
<text x="1468.5" y="243.7" font-size="21" fill="#7e7e7e" font-family="'Liberation Sans', sans-serif" textLength="210" lengthAdjust="spacingAndGlyphs" stroke="#7e7e7e" stroke-width="0.45" >ignoreEmptyTokens:</text>
<text x="1693" y="245" font-size="24" fill="#cc7832" font-family="'Liberation Mono', monospace" textLength="56" lengthAdjust="spacingAndGlyphs" stroke="#cc7832" stroke-width="0.75" >true</text>
<text x="1749" y="245" font-size="24" fill="#a9b7c6" font-family="'Liberation Mono', monospace" textLength="14" lengthAdjust="spacingAndGlyphs" stroke="#a9b7c6" stroke-width="0.75" >)</text>
<text x="1763" y="245" font-size="24" fill="#cc7832" font-family="'Liberation Mono', monospace" textLength="14" lengthAdjust="spacingAndGlyphs" stroke="#cc7832" stroke-width="0.75" >;</text>
<rect x="971" y="219" width="3" height="34" fill="#bbbbbb" />
<text x="357.9" y="173.5" font-size="23" fill="#606366" font-family="'Liberation Mono', monospace" textLength="26.6" lengthAdjust="spacingAndGlyphs" stroke="#606366" stroke-width="0.75" >99</text>
<text x="344.6" y="209.5" font-size="23" fill="#606366" font-family="'Liberation Mono', monospace" textLength="39.900000000000006" lengthAdjust="spacingAndGlyphs" stroke="#606366" stroke-width="0.75" >100</text>
<text x="344.6" y="245.5" font-size="23" fill="#a4a3a3" font-family="'Liberation Mono', monospace" textLength="39.900000000000006" lengthAdjust="spacingAndGlyphs" stroke="#a4a3a3" stroke-width="0.75" >101</text>
<text x="344.6" y="281.5" font-size="23" fill="#606366" font-family="'Liberation Mono', monospace" textLength="39.900000000000006" lengthAdjust="spacingAndGlyphs" stroke="#606366" stroke-width="0.75" >102</text>
<text x="344.6" y="317.5" font-size="23" fill="#606366" font-family="'Liberation Mono', monospace" textLength="39.900000000000006" lengthAdjust="spacingAndGlyphs" stroke="#606366" stroke-width="0.75" >103</text>
<text x="344.6" y="353.5" font-size="23" fill="#606366" font-family="'Liberation Mono', monospace" textLength="39.900000000000006" lengthAdjust="spacingAndGlyphs" stroke="#606366" stroke-width="0.75" >104</text>
<text x="344.6" y="389.5" font-size="23" fill="#606366" font-family="'Liberation Mono', monospace" textLength="39.900000000000006" lengthAdjust="spacingAndGlyphs" stroke="#606366" stroke-width="0.75" >105</text>
<text x="344.6" y="425.5" font-size="23" fill="#606366" font-family="'Liberation Mono', monospace" textLength="39.900000000000006" lengthAdjust="spacingAndGlyphs" stroke="#606366" stroke-width="0.75" >106</text>
<text x="344.6" y="461.5" font-size="23" fill="#606366" font-family="'Liberation Mono', monospace" textLength="39.900000000000006" lengthAdjust="spacingAndGlyphs" stroke="#606366" stroke-width="0.75" >107</text>
<text x="344.6" y="497.5" font-size="23" fill="#606366" font-family="'Liberation Mono', monospace" textLength="39.900000000000006" lengthAdjust="spacingAndGlyphs" stroke="#606366" stroke-width="0.75" >108</text>
<text x="344.6" y="533.5" font-size="23" fill="#606366" font-family="'Liberation Mono', monospace" textLength="39.900000000000006" lengthAdjust="spacingAndGlyphs" stroke="#606366" stroke-width="0.75" >109</text>
<text x="344.6" y="569.5" font-size="23" fill="#606366" font-family="'Liberation Mono', monospace" textLength="39.900000000000006" lengthAdjust="spacingAndGlyphs" stroke="#606366" stroke-width="0.75" >110</text>
<text x="344.6" y="605.5" font-size="23" fill="#606366" font-family="'Liberation Mono', monospace" textLength="39.900000000000006" lengthAdjust="spacingAndGlyphs" stroke="#606366" stroke-width="0.75" >111</text>
<text x="344.6" y="641.5" font-size="23" fill="#606366" font-family="'Liberation Mono', monospace" textLength="39.900000000000006" lengthAdjust="spacingAndGlyphs" stroke="#606366" stroke-width="0.75" >112</text>
<text x="344.6" y="677.5" font-size="23" fill="#606366" font-family="'Liberation Mono', monospace" textLength="39.900000000000006" lengthAdjust="spacingAndGlyphs" stroke="#606366" stroke-width="0.75" >113</text>
<text x="344.6" y="713.5" font-size="23" fill="#606366" font-family="'Liberation Mono', monospace" textLength="39.900000000000006" lengthAdjust="spacingAndGlyphs" stroke="#606366" stroke-width="0.75" >114</text>
<text x="344.6" y="749.5" font-size="23" fill="#606366" font-family="'Liberation Mono', monospace" textLength="39.900000000000006" lengthAdjust="spacingAndGlyphs" stroke="#606366" stroke-width="0.75" >115</text>
<text x="344.6" y="785.5" font-size="23" fill="#606366" font-family="'Liberation Mono', monospace" textLength="39.900000000000006" lengthAdjust="spacingAndGlyphs" stroke="#606366" stroke-width="0.75" >116</text>
<text x="344.6" y="821.5" font-size="23" fill="#606366" font-family="'Liberation Mono', monospace" textLength="39.900000000000006" lengthAdjust="spacingAndGlyphs" stroke="#606366" stroke-width="0.75" >117</text>
<text x="344.6" y="857.5" font-size="23" fill="#606366" font-family="'Liberation Mono', monospace" textLength="39.900000000000006" lengthAdjust="spacingAndGlyphs" stroke="#606366" stroke-width="0.75" >118</text>
<text x="344.6" y="893.5" font-size="23" fill="#606366" font-family="'Liberation Mono', monospace" textLength="39.900000000000006" lengthAdjust="spacingAndGlyphs" stroke="#606366" stroke-width="0.75" >119</text>
<text x="344.6" y="929.5" font-size="23" fill="#606366" font-family="'Liberation Mono', monospace" textLength="39.900000000000006" lengthAdjust="spacingAndGlyphs" stroke="#606366" stroke-width="0.75" >120</text>
<text x="344.6" y="965.5" font-size="23" fill="#606366" font-family="'Liberation Mono', monospace" textLength="39.900000000000006" lengthAdjust="spacingAndGlyphs" stroke="#606366" stroke-width="0.75" >121</text>
<text x="344.6" y="1001.5" font-size="23" fill="#606366" font-family="'Liberation Mono', monospace" textLength="39.900000000000006" lengthAdjust="spacingAndGlyphs" stroke="#606366" stroke-width="0.75" >122</text>
<text x="344.6" y="1037.5" font-size="23" fill="#606366" font-family="'Liberation Mono', monospace" textLength="39.900000000000006" lengthAdjust="spacingAndGlyphs" stroke="#606366" stroke-width="0.75" >123</text>
<text x="344.6" y="1073.5" font-size="23" fill="#606366" font-family="'Liberation Mono', monospace" textLength="39.900000000000006" lengthAdjust="spacingAndGlyphs" stroke="#606366" stroke-width="0.75" >124</text>
<text x="344.6" y="1109.5" font-size="23" fill="#606366" font-family="'Liberation Mono', monospace" textLength="39.900000000000006" lengthAdjust="spacingAndGlyphs" stroke="#606366" stroke-width="0.75" >125</text>
<text x="344.6" y="1145.5" font-size="23" fill="#606366" font-family="'Liberation Mono', monospace" textLength="39.900000000000006" lengthAdjust="spacingAndGlyphs" stroke="#606366" stroke-width="0.75" >126</text>
<text x="344.6" y="1181.5" font-size="23" fill="#606366" font-family="'Liberation Mono', monospace" textLength="39.900000000000006" lengthAdjust="spacingAndGlyphs" stroke="#606366" stroke-width="0.75" >127</text>
<text x="344.6" y="1217.5" font-size="23" fill="#606366" font-family="'Liberation Mono', monospace" textLength="39.900000000000006" lengthAdjust="spacingAndGlyphs" stroke="#606366" stroke-width="0.75" >128</text>
<text x="344.6" y="1253.5" font-size="23" fill="#606366" font-family="'Liberation Mono', monospace" textLength="39.900000000000006" lengthAdjust="spacingAndGlyphs" stroke="#606366" stroke-width="0.75" >129</text>
<g transform="translate(0,0)">
<circle cx="417.8" cy="200.2" r="4.4" fill="none" stroke="#b5b5b5" stroke-width="2.5" />
<path d="M422.2 195v7c0 2 1 3 2.6 3c2.4 0 3.6-2.6 3.6-5.6a10.3 10.3 0 1 0 -5 8.8" fill="none" stroke="#b5b5b5" stroke-width="2.3" />
</g>
<g transform="translate(0,144)">
<circle cx="417.8" cy="200.2" r="4.4" fill="none" stroke="#b5b5b5" stroke-width="2.5" />
<path d="M422.2 195v7c0 2 1 3 2.6 3c2.4 0 3.6-2.6 3.6-5.6a10.3 10.3 0 1 0 -5 8.8" fill="none" stroke="#b5b5b5" stroke-width="2.3" />
</g>
<g transform="translate(0,1044)">
<circle cx="417.8" cy="200.2" r="4.4" fill="none" stroke="#b5b5b5" stroke-width="2.5" />
<path d="M422.2 195v7c0 2 1 3 2.6 3c2.4 0 3.6-2.6 3.6-5.6a10.3 10.3 0 1 0 -5 8.8" fill="none" stroke="#b5b5b5" stroke-width="2.3" />
</g>
<path d="M450.5 196h15.5v12.7l-7.75 6.6l-7.75-6.6z" fill="#2b2b2b" stroke="#5e5e5e" stroke-width="2" />
<path d="M454 203.9h8.5" fill="none" stroke="#5e5e5e" stroke-width="2.2" />
<path d="M450.5 340h15.5v12.7l-7.75 6.6l-7.75-6.6z" fill="#2b2b2b" stroke="#5e5e5e" stroke-width="2" />
<path d="M454 347.9h8.5" fill="none" stroke="#5e5e5e" stroke-width="2.2" />
<path d="M450.5 376h15.5v12.7l-7.75 6.6l-7.75-6.6z" fill="#2b2b2b" stroke="#5e5e5e" stroke-width="2" />
<path d="M454 383.9h8.5" fill="none" stroke="#5e5e5e" stroke-width="2.2" />
<path d="M450.5 592h15.5v12.7l-7.75 6.6l-7.75-6.6z" fill="#2b2b2b" stroke="#5e5e5e" stroke-width="2" />
<path d="M454 599.9h8.5" fill="none" stroke="#5e5e5e" stroke-width="2.2" />
<path d="M450.5 664h15.5v12.7l-7.75 6.6l-7.75-6.6z" fill="#2b2b2b" stroke="#5e5e5e" stroke-width="2" />
<path d="M454 671.9h8.5" fill="none" stroke="#5e5e5e" stroke-width="2.2" />
<path d="M450.5 700h15.5v12.7l-7.75 6.6l-7.75-6.6z" fill="#2b2b2b" stroke="#5e5e5e" stroke-width="2" />
<path d="M454 707.9h8.5" fill="none" stroke="#5e5e5e" stroke-width="2.2" />
<path d="M450.5 880h15.5v12.7l-7.75 6.6l-7.75-6.6z" fill="#2b2b2b" stroke="#5e5e5e" stroke-width="2" />
<path d="M454 887.9h8.5" fill="none" stroke="#5e5e5e" stroke-width="2.2" />
<path d="M450.5 1240h15.5v12.7l-7.75 6.6l-7.75-6.6z" fill="#2b2b2b" stroke="#5e5e5e" stroke-width="2" />
<path d="M454 1247.9h8.5" fill="none" stroke="#5e5e5e" stroke-width="2.2" />
<path d="M450.5 283.7h15.5v-12.4l-7.75-6.5l-7.75 6.5z" fill="#2b2b2b" stroke="#5e5e5e" stroke-width="2" />
<path d="M454 278h8.5" fill="none" stroke="#5e5e5e" stroke-width="2.2" />
<path d="M450.5 463.7h15.5v-12.4l-7.75-6.5l-7.75 6.5z" fill="#2b2b2b" stroke="#5e5e5e" stroke-width="2" />
<path d="M454 458h8.5" fill="none" stroke="#5e5e5e" stroke-width="2.2" />
<path d="M450.5 787.7h15.5v-12.4l-7.75-6.5l-7.75 6.5z" fill="#2b2b2b" stroke="#5e5e5e" stroke-width="2" />
<path d="M454 782h8.5" fill="none" stroke="#5e5e5e" stroke-width="2.2" />
<path d="M450.5 967.7h15.5v-12.4l-7.75-6.5l-7.75 6.5z" fill="#2b2b2b" stroke="#5e5e5e" stroke-width="2" />
<path d="M454 962h8.5" fill="none" stroke="#5e5e5e" stroke-width="2.2" />
<path d="M450.5 1003.7h15.5v-12.4l-7.75-6.5l-7.75 6.5z" fill="#2b2b2b" stroke="#5e5e5e" stroke-width="2" />
<path d="M454 998h8.5" fill="none" stroke="#5e5e5e" stroke-width="2.2" />
<path d="M450.5 1111.7h15.5v-12.4l-7.75-6.5l-7.75 6.5z" fill="#2b2b2b" stroke="#5e5e5e" stroke-width="2" />
<path d="M454 1106h8.5" fill="none" stroke="#5e5e5e" stroke-width="2.2" />
<path d="M450.5 1147.7h15.5v-12.4l-7.75-6.5l-7.75 6.5z" fill="#2b2b2b" stroke="#5e5e5e" stroke-width="2" />
<path d="M454 1142h8.5" fill="none" stroke="#5e5e5e" stroke-width="2.2" />
<path d="M450.5 1183.7h15.5v-12.4l-7.75-6.5l-7.75 6.5z" fill="#2b2b2b" stroke="#5e5e5e" stroke-width="2" />
<path d="M454 1178h8.5" fill="none" stroke="#5e5e5e" stroke-width="2.2" />
<path d="M489.2 231.5a10.2 10.2 0 1 1 13.6 0l-0.8 4.2h-12z" fill="#f0a732" />
<rect x="490" y="237.9" width="12" height="2.3" fill="#d0d0d0" />
<path d="M491 241.9h10l-1 2.1h-8z" fill="#d0d0d0" />
<rect x="688.5" y="857.5" width="501.5" height="124.5" fill="none" rx="10" stroke="#f42222" stroke-width="5.4"/>
<rect x="2818" y="474" width="15" height="105" fill="#4b4d4e" rx="7" />
<rect x="2810" y="474" width="28" height="3" fill="#1f7a1f" />
<rect x="2810" y="486" width="28" height="3" fill="#1f7a1f" />
</g></svg>
<rect x="334" y="1248" width="2503" height="1.5" fill="#323232" />
<rect x="334" y="1249" width="2503" height="43" fill="#313335" />
<text x="477.5" y="1281" font-size="25.7" fill="#bbbbbb" font-family="'Liberation Sans', sans-serif" textLength="120" lengthAdjust="spacingAndGlyphs" stroke="#bbbbbb" stroke-width="0.45" >StringUtils</text>
<path d="M618.5 1265l6 6l-6 6" fill="none" stroke="#6b6d6f" stroke-width="1.5" />
<text x="642.0" y="1281" font-size="26" fill="#bbbbbb" font-family="'Liberation Sans', sans-serif" textLength="275.5" lengthAdjust="spacingAndGlyphs" stroke="#bbbbbb" stroke-width="0.45" >tokenizeToStringArray()</text>
<rect x="42" y="1292" width="2795" height="2" fill="#2b2b2b" />
<text x="53.5" y="1330.5" font-size="25" fill="#bbbbbb" font-family="'Liberation Sans', sans-serif" textLength="82" lengthAdjust="spacingAndGlyphs" stroke="#bbbbbb" stroke-width="0.45" >Debug:</text>
<g transform="translate(0,0)">
<path d="M176 1330c0-10 8-14 17-16c6-1 9-4 9-6c2 5 2 10 1 13l-14 0l-4 10c-3 2-6 1-9-1z" fill="#5d9a4a" />
<path d="M181 1333.5c2-1 5-2 8-1.5l-1 2z" fill="#5d9a4a" />
<path d="M188 1327.5l4.8-9h10.4l4.8 9l-4.8 9h-10.4z" fill="#a9b5bf" stroke="#2f3133" stroke-width="1.6" />
<path d="M194.2 1324.5a5 5 0 1 0 5.6 0" fill="none" stroke="#2f3133" stroke-width="1.7" />
<path d="M197 1321.5v5.5" fill="none" stroke="#2f3133" stroke-width="1.7" />
<circle cx="202.8" cy="1332.6" r="4.4" fill="#00e000" stroke="#2f3133" stroke-width="1.2" />
</g>
<text x="212.8" y="1330.5" font-size="25.6" fill="#bbbbbb" font-family="'Liberation Sans', sans-serif" textLength="312.1" lengthAdjust="spacingAndGlyphs" stroke="#bbbbbb" stroke-width="0.45" >SpringbootShiroApplication</text>
<path d="M538.5 1315L552.5 1329M552.5 1315L538.5 1329" fill="none" stroke="#6f7275" stroke-width="2" />
<rect x="150" y="1342" width="426" height="6" fill="#747a80" />
<circle cx="2760" cy="1319.5" r="7.5" fill="none" stroke="#afb1b3" stroke-width="5.75" />
<line x1="2760.0" y1="1313.25" x2="2760.0" y2="1307.0" stroke="#afb1b3" stroke-width="7.000000000000001" />
<line x1="2765.41" y1="1316.38" x2="2770.83" y2="1313.25" stroke="#afb1b3" stroke-width="7.000000000000001" />
<line x1="2765.41" y1="1322.62" x2="2770.83" y2="1325.75" stroke="#afb1b3" stroke-width="7.000000000000001" />
<line x1="2760.0" y1="1325.75" x2="2760.0" y2="1332.0" stroke="#afb1b3" stroke-width="7.000000000000001" />
<line x1="2754.59" y1="1322.62" x2="2749.17" y2="1325.75" stroke="#afb1b3" stroke-width="7.000000000000001" />
<line x1="2754.59" y1="1316.38" x2="2749.17" y2="1313.25" stroke="#afb1b3" stroke-width="7.000000000000001" />
<rect x="2800" y="1318.5" width="25" height="3" fill="#afb1b3" />
<rect x="42" y="1346" width="2795" height="2" fill="#2b2b2b" />
<rect x="150" y="1342" width="426" height="6" fill="#747a80" />
<rect x="99" y="1348" width="2" height="352" fill="#2b2b2b" />
<path d="M75 1388.5a9.3 9.3 0 0 1 0-18.6h3" fill="none" stroke="#499c54" stroke-width="4.6" />
<path d="M76 1361.5l9.5 8.5l-9.5 8.5z" fill="#499c54" />
<rect x="72" y="1379.6" width="10" height="10" fill="#c2c2c2" />
<rect x="51" y="1408" width="39" height="2" fill="#555" />
<rect x="59" y="1430" width="7" height="24" fill="#499c54" />
<path d="M69 1430v24l16-12z" fill="#499c54" />
<rect x="61.6" y="1482" width="5.8" height="22" fill="#5a5a5a" />
<rect x="72" y="1482" width="6" height="22" fill="#5a5a5a" />
<rect x="60" y="1536" width="20" height="20" fill="#c75450" />
<rect x="51" y="1578" width="39" height="2" fill="#555" />
<circle cx="76.2" cy="1605.2" r="8" fill="#c75450" />
<circle cx="67" cy="1614.4" r="9" fill="#c75450" stroke="#3c3f41" stroke-width="2.2"/>
<path d="M64.5 1676.5l5 4.5l-5 4.5M71.5 1676.5l5 4.5l-5 4.5" fill="none" stroke="#afb1b3" stroke-width="2" />
<rect x="101" y="1402" width="2736" height="2" fill="#2b2b2b" />
<text x="124.5" y="1384" font-size="23.2" fill="#bbbbbb" font-family="'Liberation Sans', sans-serif" textLength="105" lengthAdjust="spacingAndGlyphs" stroke="#bbbbbb" stroke-width="0.45" >Debugger</text>
<rect x="100" y="1400" width="154" height="4" fill="#747a80" />
<rect x="280" y="1366" width="24" height="20" fill="#b9b9b9" />
<path d="M285 1370.5l6 5l-6 5" fill="none" stroke="#3c3f41" stroke-width="3" />
<circle cx="301" cy="1383" r="7" fill="#f0a732" />
<path d="M301 1378v8M297 1383l4 4l4-4" fill="none" stroke="#3c3f41" stroke-width="1.8" />
<text x="315.0" y="1384" font-size="22.5" fill="#bbbbbb" font-family="'Liberation Sans', sans-serif" textLength="84.5" lengthAdjust="spacingAndGlyphs" stroke="#bbbbbb" stroke-width="0.45" >Console</text>
<circle cx="457.3" cy="1366.8" r="4.6" fill="#c35a29" />
<circle cx="444.8" cy="1385" r="4.8" fill="#c35a29" />
<circle cx="463.5" cy="1385" r="4.8" fill="#c35a29" />
<path d="M457.3 1366.8L446.5 1381M457.3 1366.8L463.5 1383M442 1372.5l2.5 10M467.8 1372.5l-2.5 10" fill="none" stroke="#c35a29" stroke-width="2.4" />
<text x="476.5" y="1384" font-size="22.7" fill="#bbbbbb" font-family="'Liberation Sans', sans-serif" textLength="104" lengthAdjust="spacingAndGlyphs" stroke="#bbbbbb" stroke-width="0.45" >Endpoints</text>
<rect x="610" y="1364" width="24" height="4" fill="#c8c8c8" />
<rect x="610" y="1372" width="24" height="6" fill="#3592c4" />
<rect x="610" y="1382" width="24" height="4" fill="#c8c8c8" />
<rect x="654" y="1354" width="2" height="40" fill="#555" />
<path d="M675 1374l10-10l9 9" fill="none" stroke="#3592c4" stroke-width="3.2" />
<path d="M688 1376h12v-12z" fill="#3592c4" />
<rect x="676" y="1382" width="24" height="4" fill="#c8c8c8" />
<rect x="738" y="1360" width="4" height="12" fill="#3592c4" />
<path d="M730 1370h20l-10 10z" fill="#3592c4" />
<rect x="728" y="1382" width="24" height="4" fill="#c8c8c8" />
<rect x="790" y="1360" width="4" height="12" fill="#c75450" />
<path d="M782 1370h20l-10 10z" fill="#c75450" />
<rect x="780" y="1382" width="24" height="4" fill="#c8c8c8" />
<rect x="842" y="1368" width="4" height="12" fill="#3592c4" />
<path d="M834 1370h20l-10 -10z" fill="#3592c4" />
<rect x="832" y="1382" width="24" height="4" fill="#c8c8c8" />
<path d="M884 1362l12 12M896 1362l-12 12" fill="none" stroke="#c75450" stroke-width="3" />
<path d="M898 1369.5h8.5v16.5h-16.5v-10.5" fill="none" stroke="#c8c8c8" stroke-width="3.2" />
<path d="M936 1362l10 10" fill="none" stroke="#3592c4" stroke-width="3" />
<path d="M939 1376h12v-12z" fill="#3592c4" />
<path d="M952 1373h8M956 1373v14M952 1387h8" fill="none" stroke="#c8c8c8" stroke-width="1.6" />
<rect x="980" y="1354" width="2" height="40" fill="#555" />
<rect x="1002" y="1362" width="24" height="24" fill="#c8c8c8" />
<rect x="1006" y="1370" width="4" height="3" fill="#3c3f41" />
<rect x="1012" y="1370" width="4" height="3" fill="#3c3f41" />
<rect x="1018" y="1370" width="4" height="3" fill="#3c3f41" />
<rect x="1006" y="1375" width="4" height="3" fill="#3c3f41" />
<rect x="1012" y="1375" width="4" height="3" fill="#3c3f41" />
<rect x="1018" y="1375" width="4" height="3" fill="#3c3f41" />
<rect x="1006" y="1380" width="4" height="3" fill="#3c3f41" />
<rect x="1012" y="1380" width="4" height="3" fill="#3c3f41" />
<rect x="1018" y="1380" width="4" height="3" fill="#3c3f41" />
<rect x="1006" y="1365" width="16" height="3" fill="#3c3f41" />
<path d="M1054 1366h24M1054 1374h24M1054 1382h24" fill="none" stroke="#5a5d5f" stroke-width="3.5" />
<rect x="2798" y="1364" width="26" height="22" fill="#afb1b3" />
<rect x="2810" y="1364" width="2" height="12" fill="#3c3f41" />
<rect x="2798" y="1376" width="26" height="2" fill="#3c3f41" />
<path d="M2814 1386h12l-6 6z" fill="#afb1b3" />
<text x="124.5" y="1438" font-size="22" fill="#bbbbbb" font-family="'Liberation Sans', sans-serif" textLength="76" lengthAdjust="spacingAndGlyphs" stroke="#bbbbbb" stroke-width="0.45" >Frames</text>
<text x="249.2" y="1438" font-size="22.4" fill="#bbbbbb" font-family="'Liberation Sans', sans-serif" textLength="85.3" lengthAdjust="spacingAndGlyphs" stroke="#bbbbbb" stroke-width="0.45" >Threads</text>
<rect x="101" y="1456" width="938" height="2" fill="#2b2b2b" />
<rect x="100" y="1453.7" width="126" height="4.2" fill="#747a80" />
<rect x="1038.5" y="1404" width="2.5" height="296" fill="#2b2b2b" />
<rect x="107" y="1465" width="759" height="46" fill="none" rx="4" stroke="#5e6165" stroke-width="2"/>
<path d="M123 1488l8 8l16-18" fill="none" stroke="#e0652f" stroke-width="4.5" />
<text x="157.5" y="1498.3" font-size="27.5" fill="#bbbbbb" font-family="'Liberation Sans', sans-serif" textLength="650" lengthAdjust="spacingAndGlyphs" stroke="#bbbbbb" stroke-width="0.45" >&quot;http-nio-8080-exec-1&quot;...n group &quot;main&quot;: RUNNING</text>
<path d="M835 1485h19l-9.5 9z" fill="#afb1b3" />
<path d="M903 1500v-22M894 1487l9-9l9 9" fill="none" stroke="#5a5d5f" stroke-width="3" />
<path d="M956 1477v22M947 1490l9 9l9-9" fill="none" stroke="#c8c8c8" stroke-width="3" />
<path d="M995 1477h25l-9 11v12h-7v-12z" fill="#c8c8c8" />
<svg x="101" y="1520" width="937" height="180" overflow="hidden"><g transform="translate(-101,-1520)">
<rect x="101" y="1520" width="937" height="180" fill="#4c493e" />
<rect x="101" y="1519.5" width="937" height="2.5" fill="#2d2f30" />
<rect x="101" y="1522" width="937" height="40" fill="#2f65ca" />
<text x="130.8" y="1551.8" font-size="28" fill="#ffffff" font-family="'Liberation Sans', sans-serif" textLength="372.7" lengthAdjust="spacingAndGlyphs" stroke="#ffffff" stroke-width="0.45" >doMatch:116, AntPathMatcher</text>
<text x="515.5" y="1551.8" font-size="28" fill="#ffffff" font-family="'Liberation Sans', sans-serif" textLength="276" lengthAdjust="spacingAndGlyphs" font-style="italic" stroke="#ffffff" stroke-width="0.45" >(org.apache.shiro.util)</text>
<text x="130.8" y="1591.8" font-size="28" fill="#858585" font-family="'Liberation Sans', sans-serif" textLength="335.1" lengthAdjust="spacingAndGlyphs" stroke="#858585" stroke-width="0.45" >match:90, AntPathMatcher</text>
<text x="474.5" y="1591.8" font-size="28" fill="#858585" font-family="'Liberation Sans', sans-serif" textLength="276.7" lengthAdjust="spacingAndGlyphs" font-style="italic" stroke="#858585" stroke-width="0.45" >(org.apache.shiro.util)</text>
<text x="130.8" y="1631.8" font-size="28" fill="#858585" font-family="'Liberation Sans', sans-serif" textLength="364.7" lengthAdjust="spacingAndGlyphs" stroke="#858585" stroke-width="0.45" >matches:86, AntPathMatcher</text>
<text x="505.2" y="1631.8" font-size="28" fill="#858585" font-family="'Liberation Sans', sans-serif" textLength="275.9" lengthAdjust="spacingAndGlyphs" font-style="italic" stroke="#858585" stroke-width="0.45" >(org.apache.shiro.util)</text>
<text x="130.8" y="1671.8" font-size="28" fill="#858585" font-family="'Liberation Sans', sans-serif" textLength="645.4" lengthAdjust="spacingAndGlyphs" stroke="#858585" stroke-width="0.45" >pathMatches:152, PathMatchingFilterChainResolver</text>
<text x="784.3" y="1671.8" font-size="28" fill="#858585" font-family="'Liberation Sans', sans-serif" textLength="397.2" lengthAdjust="spacingAndGlyphs" font-style="italic" stroke="#858585" stroke-width="0.45" >(org.apache.shiro.web.filter.mgt)</text>
<text x="130.8" y="1711.8" font-size="28" fill="#858585" font-family="'Liberation Sans', sans-serif" textLength="610.7" lengthAdjust="spacingAndGlyphs" stroke="#858585" stroke-width="0.45" >getChain:122, PathMatchingFilterChainResolver</text>
<text x="750.5" y="1711.8" font-size="28" fill="#858585" font-family="'Liberation Sans', sans-serif" textLength="397" lengthAdjust="spacingAndGlyphs" font-style="italic" stroke="#858585" stroke-width="0.45" >(org.apache.shiro.web.filter.mgt)</text>
</g></svg>
<text x="1065.0" y="1438.3" font-size="23" fill="#bbbbbb" font-family="'Liberation Sans', sans-serif" textLength="97.5" lengthAdjust="spacingAndGlyphs" stroke="#bbbbbb" stroke-width="0.45" >Variables</text>
<rect x="1041" y="1456" width="1688" height="2" fill="#2b2b2b" />
<rect x="1088" y="1458" width="2" height="242" fill="#2b2b2b" />
<path d="M1064 1473v22M1053 1484h22" fill="none" stroke="#c8c8c8" stroke-width="3.2" />
<rect x="1054" y="1534.5" width="20" height="3" fill="#5a5d5f" />
<path d="M1052 1594l11-11l11 11z" fill="#5a5d5f" />
<path d="M1052 1633h22l-11 11z" fill="#5a5d5f" />
<path d="M1056.5 1680l5 4.5l-5 4.5M1063.5 1680l5 4.5l-5 4.5" fill="none" stroke="#afb1b3" stroke-width="2" />
<path d="M1095 1471v17l16 -8.5z" fill="#9a9a9a" />
<rect x="1135.5" y="1468" width="20.5" height="5.5" fill="#b38a42" />
<rect x="1135.5" y="1476.5" width="20.5" height="5.5" fill="#b38a42" />
<rect x="1135.5" y="1485" width="20.5" height="5.5" fill="#b38a42" />
<text x="1166.8" y="1490" font-size="28.4" fill="#f08a8a" font-family="'Liberation Sans', sans-serif" textLength="47.3" lengthAdjust="spacingAndGlyphs" stroke="#f08a8a" stroke-width="0.45" >this</text>
<text x="1221.6" y="1490" font-size="28" fill="#bbbbbb" font-family="'Liberation Sans', sans-serif" textLength="17.0" lengthAdjust="spacingAndGlyphs" stroke="#bbbbbb" stroke-width="0.45" >=</text>
<text x="1244.5" y="1490" font-size="28" fill="#8c8c8c" font-family="'Liberation Sans', sans-serif" textLength="312" lengthAdjust="spacingAndGlyphs" stroke="#8c8c8c" stroke-width="0.45" >{AntPathMatcher@5852}</text>
<path d="M1095 1511v17l16 -8.5z" fill="#9a9a9a" />
<circle cx="1145.5" cy="1520" r="14" fill="#b38a42" />
<text x="1145.5" y="1527" font-size="21" fill="#3a3020" font-family="'Liberation Sans', sans-serif" text-anchor="middle" stroke="#3a3020" stroke-width="0.45" >p</text>
<text x="1166.8" y="1530" font-size="28.4" fill="#f08a8a" font-family="'Liberation Sans', sans-serif" textLength="93.3" lengthAdjust="spacingAndGlyphs" stroke="#f08a8a" stroke-width="0.45" >pattern</text>
<text x="1267.6" y="1530" font-size="28" fill="#bbbbbb" font-family="'Liberation Sans', sans-serif" textLength="17.0" lengthAdjust="spacingAndGlyphs" stroke="#bbbbbb" stroke-width="0.45" >=</text>
<text x="1292.0" y="1530" font-size="28" fill="#6a8759" font-family="'Liberation Sans', sans-serif" textLength="126.2" lengthAdjust="spacingAndGlyphs" stroke="#6a8759" stroke-width="0.45" >&quot;/admin/*&quot;</text>
<path d="M1095 1551v17l16 -8.5z" fill="#9a9a9a" />
<circle cx="1145.5" cy="1560" r="14" fill="#b38a42" />
<text x="1145.5" y="1567" font-size="21" fill="#3a3020" font-family="'Liberation Sans', sans-serif" text-anchor="middle" stroke="#3a3020" stroke-width="0.45" >p</text>
<text x="1166.8" y="1570" font-size="28.4" fill="#f08a8a" font-family="'Liberation Sans', sans-serif" textLength="57.7" lengthAdjust="spacingAndGlyphs" stroke="#f08a8a" stroke-width="0.45" >path</text>
<text x="1232.0" y="1570" font-size="28" fill="#bbbbbb" font-family="'Liberation Sans', sans-serif" textLength="17.0" lengthAdjust="spacingAndGlyphs" stroke="#bbbbbb" stroke-width="0.45" >=</text>
<text x="1255.5" y="1570" font-size="28" fill="#6a8759" font-family="'Liberation Sans', sans-serif" textLength="122.8" lengthAdjust="spacingAndGlyphs" stroke="#6a8759" stroke-width="0.45" >&quot;/admin/ &quot;</text>
<circle cx="1145.5" cy="1600" r="14" fill="#b38a42" />
<text x="1145.5" y="1607" font-size="21" fill="#3a3020" font-family="'Liberation Sans', sans-serif" text-anchor="middle" stroke="#3a3020" stroke-width="0.45" >p</text>
<text x="1166.8" y="1610" font-size="28.4" fill="#f08a8a" font-family="'Liberation Sans', sans-serif" textLength="114.7" lengthAdjust="spacingAndGlyphs" stroke="#f08a8a" stroke-width="0.45" >fullMatch</text>
<text x="1289.0" y="1610" font-size="28" fill="#bbbbbb" font-family="'Liberation Sans', sans-serif" textLength="17.0" lengthAdjust="spacingAndGlyphs" stroke="#bbbbbb" stroke-width="0.45" >=</text>
<text x="1312.5" y="1610" font-size="28" fill="#bbbbbb" font-family="'Liberation Sans', sans-serif" textLength="53" lengthAdjust="spacingAndGlyphs" stroke="#bbbbbb" stroke-width="0.45" >true</text>
<path d="M1095 1631v17l16 -8.5z" fill="#9a9a9a" />
<text x="1133" y="1634" font-size="9" fill="#afb1b3" font-family="'Liberation Sans', sans-serif" stroke="#afb1b3" stroke-width="0.45" >1</text>
<text x="1133" y="1643" font-size="9" fill="#afb1b3" font-family="'Liberation Sans', sans-serif" stroke="#afb1b3" stroke-width="0.45" >2</text>
<text x="1133" y="1652" font-size="9" fill="#afb1b3" font-family="'Liberation Sans', sans-serif" stroke="#afb1b3" stroke-width="0.45" >3</text>
<rect x="1142" y="1626" width="15" height="6" fill="#3e8fab" />
<rect x="1142" y="1636" width="15" height="6" fill="#3e8fab" />
<rect x="1142" y="1646" width="15" height="6" fill="#3e8fab" />
<text x="1166.8" y="1650" font-size="28.4" fill="#f08a8a" font-family="'Liberation Sans', sans-serif" textLength="101.5" lengthAdjust="spacingAndGlyphs" stroke="#f08a8a" stroke-width="0.45" >pattDirs</text>
<text x="1275.8" y="1650" font-size="28" fill="#bbbbbb" font-family="'Liberation Sans', sans-serif" textLength="17.0" lengthAdjust="spacingAndGlyphs" stroke="#bbbbbb" stroke-width="0.45" >=</text>
<text x="1299.0" y="1650" font-size="28" fill="#8c8c8c" font-family="'Liberation Sans', sans-serif" textLength="219.5" lengthAdjust="spacingAndGlyphs" stroke="#8c8c8c" stroke-width="0.45" >{String[2]@5869}</text>
<path d="M1095 1671v17l16 -8.5z" fill="#9a9a9a" />
<text x="1133" y="1674" font-size="9" fill="#afb1b3" font-family="'Liberation Sans', sans-serif" stroke="#afb1b3" stroke-width="0.45" >1</text>
<text x="1133" y="1683" font-size="9" fill="#afb1b3" font-family="'Liberation Sans', sans-serif" stroke="#afb1b3" stroke-width="0.45" >2</text>
<text x="1133" y="1692" font-size="9" fill="#afb1b3" font-family="'Liberation Sans', sans-serif" stroke="#afb1b3" stroke-width="0.45" >3</text>
<rect x="1142" y="1666" width="15" height="6" fill="#3e8fab" />
<rect x="1142" y="1676" width="15" height="6" fill="#3e8fab" />
<rect x="1142" y="1686" width="15" height="6" fill="#3e8fab" />
<text x="1166.8" y="1690" font-size="28.4" fill="#f08a8a" font-family="'Liberation Sans', sans-serif" textLength="107.7" lengthAdjust="spacingAndGlyphs" stroke="#f08a8a" stroke-width="0.45" >pathDirs</text>
<text x="1282.0" y="1690" font-size="28" fill="#bbbbbb" font-family="'Liberation Sans', sans-serif" textLength="17.0" lengthAdjust="spacingAndGlyphs" stroke="#bbbbbb" stroke-width="0.45" >=</text>
<text x="1304.3" y="1690" font-size="28" fill="#8c8c8c" font-family="'Liberation Sans', sans-serif" textLength="216.2" lengthAdjust="spacingAndGlyphs" stroke="#8c8c8c" stroke-width="0.45" >{String[1]@5872}</text>
<rect x="2729" y="1404" width="2" height="296" fill="#2b2b2b" />
<rect x="2731" y="1456" width="106" height="2" fill="#2b2b2b" />
<path d="M2784 1432h10l-5 6z" fill="#afb1b3" />
<rect x="2798" y="1426.0" width="16" height="2" fill="#c8c8c8" />
<rect x="2798" y="1430.2" width="16" height="2" fill="#c8c8c8" />
<rect x="2798" y="1434.4" width="16" height="2" fill="#c8c8c8" />
<rect x="2798" y="1438.6" width="16" height="2" fill="#c8c8c8" />
<text x="2817.0" y="1440.5" font-size="18" fill="#c8c8c8" font-family="'Liberation Sans', sans-serif" textLength="11.5" lengthAdjust="spacingAndGlyphs" stroke="#c8c8c8" stroke-width="0.45" >2</text>
<rect x="2730" y="1454" width="46" height="4" fill="#747a80" />
<rect x="2737" y="1465" width="37" height="46" fill="#45484a" rx="5" stroke="#5e6165" stroke-width="2"/>
<circle cx="2762" cy="1485.5" r="8.5" fill="none" stroke="#8a9ba3" stroke-width="1.8" />
<path d="M2768 1492l5 5" fill="none" stroke="#8a9ba3" stroke-width="2.5" />
<circle cx="2807.7" cy="1488" r="7.199999999999999" fill="none" stroke="#afb1b3" stroke-width="5.5200000000000005" />
<line x1="2807.7" y1="1482.0" x2="2807.7" y2="1476.0" stroke="#afb1b3" stroke-width="6.720000000000001" />
<line x1="2812.9" y1="1485.0" x2="2818.09" y2="1482.0" stroke="#afb1b3" stroke-width="6.720000000000001" />
<line x1="2812.9" y1="1491.0" x2="2818.09" y2="1494.0" stroke="#afb1b3" stroke-width="6.720000000000001" />
<line x1="2807.7" y1="1494.0" x2="2807.7" y2="1500.0" stroke="#afb1b3" stroke-width="6.720000000000001" />
<line x1="2802.5" y1="1491.0" x2="2797.31" y2="1494.0" stroke="#afb1b3" stroke-width="6.720000000000001" />
<line x1="2802.5" y1="1485.0" x2="2797.31" y2="1482.0" stroke="#afb1b3" stroke-width="6.720000000000001" />
<path d="M2812.5 1494h11.3l-5.6 5.6z" fill="#e0e0e0" />
<rect x="2731" y="1518" width="106" height="48" fill="#45484a" />
<circle cx="2749" cy="1549" r="1.6" fill="#bbbbbb" />
<circle cx="2754" cy="1549" r="1.6" fill="#bbbbbb" />
<circle cx="2759" cy="1549" r="1.6" fill="#bbbbbb" />
<rect x="2758" y="1520" width="2" height="46" fill="#2f3133" />
<svg x="2731" y="1404" width="106" height="296" overflow="hidden"><g transform="translate(-2731,-1404)">
<text x="2775.3" y="1550.2" font-size="23" fill="#bbbbbb" font-family="'Liberation Sans', sans-serif" textLength="59.7" lengthAdjust="spacingAndGlyphs" stroke="#bbbbbb" stroke-width="0.45" >Count</text>
<text x="2824.5" y="1628" font-size="28" fill="#589df6" font-family="'Liberation Sans', sans-serif" textLength="23" lengthAdjust="spacingAndGlyphs" stroke="#589df6" stroke-width="0.45" >L</text>
</g></svg>
<rect x="2086" y="1560" width="740" height="124" fill="#4e5052" />
<rect x="2086.5" y="1560.5" width="739" height="123" fill="none" stroke="#5a5d60" stroke-width="1"/>
<circle cx="2122" cy="1598" r="14" fill="#3592c4" />
<rect x="2120" y="1593" width="4" height="12" fill="#ffffff" />
<circle cx="2122" cy="1588" r="2.2" fill="#ffffff" />
<defs><linearGradient id="fade" x1="0" x2="1"><stop offset="0" stop-color="#bbbbbb"/><stop offset="0.85" stop-color="#bbbbbb"/><stop offset="1" stop-color="#4e5052"/></linearGradient></defs>
<text x="2149.2" y="1608" font-size="28.5" fill="#bbbbbb" font-family="'Liberation Sans', sans-serif" textLength="548.0" lengthAdjust="spacingAndGlyphs" stroke="#bbbbbb" stroke-width="0.45" >Project configurations files can be added to</text>
<text x="2708" y="1608" font-size="28" fill="#5c5e60" font-family="'Liberation Sans', sans-serif" stroke="#5c5e60" stroke-width="0.45" >(</text>
<circle cx="2738" cy="1588" r="7.199999999999999" fill="none" stroke="#6f7275" stroke-width="5.5200000000000005" />
<line x1="2738.0" y1="1582.0" x2="2738.0" y2="1576.0" stroke="#6f7275" stroke-width="6.720000000000001" />
<line x1="2743.2" y1="1585.0" x2="2748.39" y2="1582.0" stroke="#6f7275" stroke-width="6.720000000000001" />
<line x1="2743.2" y1="1591.0" x2="2748.39" y2="1594.0" stroke="#6f7275" stroke-width="6.720000000000001" />
<line x1="2738.0" y1="1594.0" x2="2738.0" y2="1600.0" stroke="#6f7275" stroke-width="6.720000000000001" />
<line x1="2732.8" y1="1591.0" x2="2727.61" y2="1594.0" stroke="#6f7275" stroke-width="6.720000000000001" />
<line x1="2732.8" y1="1585.0" x2="2727.61" y2="1582.0" stroke="#6f7275" stroke-width="6.720000000000001" />
<path d="M2785.0 1579.5L2802.0 1596.5M2802.0 1579.5L2785.0 1596.5" fill="none" stroke="#8a8d90" stroke-width="2.6" />
<text x="2149.2" y="1651" font-size="27.3" fill="#589df6" font-family="'Liberation Sans', sans-serif" textLength="126.9" lengthAdjust="spacingAndGlyphs" stroke="#589df6" stroke-width="0.45" >View Files</text>
<text x="2307.1" y="1651" font-size="27.5" fill="#589df6" font-family="'Liberation Sans', sans-serif" textLength="145.4" lengthAdjust="spacingAndGlyphs" stroke="#589df6" stroke-width="0.45" >Always Add</text>
<text x="2483.1" y="1651" font-size="28.7" fill="#589df6" font-family="'Liberation Sans', sans-serif" textLength="202.9" lengthAdjust="spacingAndGlyphs" stroke="#589df6" stroke-width="0.45" >Don&#x27;t Ask Again</text>
<rect x="0" y="1700" width="2874" height="2" fill="#2b2b2b" />
<rect x="0" y="1742" width="2874" height="2" fill="#4a4c4e" />
<rect x="70" y="1711.7" width="4.3" height="22.2" fill="#c0c0c0" />
<rect x="74" y="1725.2" width="12" height="3.8" fill="#c0c0c0" />
<rect x="81.6" y="1717" width="4.3" height="12" fill="#c0c0c0" />
<path d="M77.2 1719.7l6.8-8l6.8 8z" fill="#c0c0c0" />
<text x="98.3" y="1731" font-size="22.7" fill="#bbbbbb" font-family="'Liberation Sans', sans-serif" textLength="183.6" lengthAdjust="spacingAndGlyphs" stroke="#bbbbbb" stroke-width="0.45" >9: Version Control</text>
<rect x="100" y="1734" width="14" height="2" fill="#bbbbbb" />
<rect x="329.7" y="1711.7" width="22.2" height="20.3" fill="#c0c0c0" />
<path d="M333.5 1715l5 4.5l-5 4.5" fill="none" stroke="#3c3f41" stroke-width="1.8" />
<rect x="340" y="1725.5" width="8" height="2" fill="#3c3f41" />
<text x="361.8" y="1731" font-size="22.5" fill="#bbbbbb" font-family="'Liberation Sans', sans-serif" textLength="88.0" lengthAdjust="spacingAndGlyphs" stroke="#bbbbbb" stroke-width="0.45" >Terminal</text>
<path d="M490 1720.5l11.5-9.5l5 5.5l-11.5 8.5z" fill="#c0c0c0" />
<path d="M501 1718l13 15" fill="none" stroke="#c0c0c0" stroke-width="5.5" />
<text x="523.1" y="1731" font-size="22.5" fill="#bbbbbb" font-family="'Liberation Sans', sans-serif" textLength="53.1" lengthAdjust="spacingAndGlyphs" stroke="#bbbbbb" stroke-width="0.45" >Build</text>
<path d="M630 1711a11.5 11.5 0 1 0 13.5 13" fill="none" stroke="#8c8c8c" stroke-width="2.6" />
<path d="M634.5 1710v11h11a11 11 0 0 0 -11 -11z" fill="none" stroke="#8c8c8c" stroke-width="2.4" />
<text x="654.5" y="1731" font-size="24" fill="#bbbbbb" font-family="'Liberation Sans', sans-serif" textLength="89.2" lengthAdjust="spacingAndGlyphs" stroke="#bbbbbb" stroke-width="0.45" >Statistic</text>
<rect x="788.2" y="1712.2" width="20" height="19.4" fill="#c0c0c0" />
<rect x="794.5" y="1720.5" width="19" height="17" fill="#3c3f41" />
<rect x="796" y="1722.3" width="16" height="13.3" fill="none" stroke="#c0c0c0" stroke-width="2"/>
<text x="798.5" y="1733.5" font-size="10.5" fill="#c0c0c0" font-family="'Liberation Sans', sans-serif" textLength="11" lengthAdjust="spacingAndGlyphs" font-weight="bold" stroke="#c0c0c0" stroke-width="0.45" >EE</text>
<text x="818.7" y="1731" font-size="22.7" fill="#bbbbbb" font-family="'Liberation Sans', sans-serif" textLength="160.6" lengthAdjust="spacingAndGlyphs" stroke="#bbbbbb" stroke-width="0.45" >Java Enterprise</text>
<path d="M1026 1732c2-10 10-18 22-20c2 8 -2 16 -12 20c-4 2-8 1-10 0z" fill="#afb1b3" />
<text x="1056.8" y="1731" font-size="22.5" fill="#bbbbbb" font-family="'Liberation Sans', sans-serif" textLength="69.1" lengthAdjust="spacingAndGlyphs" stroke="#bbbbbb" stroke-width="0.45" >Spring</text>
<circle cx="1179" cy="1723" r="9.5" fill="none" stroke="#afb1b3" stroke-width="3" />
<path d="M1170.75 1719.15c3.3 -1.1 5.5 2.2 4.95 5.5c-0.55 3.3 3.8499999999999996 2.2 2.2 7.699999999999999l-4.4 3.3c-3.3 -3.3 -5.5 -8.8 -2.75 -16.5z" fill="#afb1b3" />
<path d="M1180.1 1713.65c3.3 2.2 1.1 5.5 5.5 6.6c3.3 0 3.3 5.5 1.1 9.9c2.2 2.2 4.4 -1.1 3.3 -5.5c0 -5.5 -3.3 -8.8 -9.9 -11.0z" fill="#afb1b3" />
<text x="1198.5" y="1731" font-size="22.7" fill="#bbbbbb" font-family="'Liberation Sans', sans-serif" textLength="104" lengthAdjust="spacingAndGlyphs" stroke="#bbbbbb" stroke-width="0.45" >Endpoints</text>
<path d="M1346 1712v18l15-9z" fill="#afb1b3" />
<text x="1374.1" y="1731" font-size="22.5" fill="#bbbbbb" font-family="'Liberation Sans', sans-serif" textLength="67.9" lengthAdjust="spacingAndGlyphs" stroke="#bbbbbb" stroke-width="0.45" >4: Run</text>
<rect x="1376" y="1734" width="13" height="2" fill="#bbbbbb" />
<rect x="1458" y="1702" width="169.4" height="40" fill="#2e3033" />
<ellipse cx="1493" cy="1725.0" rx="7.800000000000001" ry="9.5" fill="#afb1b3"/>
<path d="M1488.0 1717.5a5.0 4.5 0 0 1 10 0z" fill="#afb1b3" />
<path d="M1488.5 1712.0l2.5 4.0M1497.5 1712.0l-2.5 4.0" fill="none" stroke="#afb1b3" stroke-width="2.0" />
<path d="M1482.5 1720.5h3.0M1503.5 1720.5h-3.0" fill="none" stroke="#afb1b3" stroke-width="2.2" />
<path d="M1482.5 1725.5h3.0M1503.5 1725.5h-3.0" fill="none" stroke="#afb1b3" stroke-width="2.2" />
<path d="M1482.5 1730.5h3.0M1503.5 1730.5h-3.0" fill="none" stroke="#afb1b3" stroke-width="2.2" />
<path d="M1485.2 1719.0h15.600000000000001" fill="none" stroke="#2e3033" stroke-width="1.5" />
<circle cx="1502" cy="1732" r="4.2" fill="#22dd22" />
<text x="1512.5" y="1731" font-size="23" fill="#dddddd" font-family="'Liberation Sans', sans-serif" textLength="95.7" lengthAdjust="spacingAndGlyphs" stroke="#dddddd" stroke-width="0.45" >5: Debug</text>
<rect x="1514" y="1734" width="13" height="2" fill="#dddddd" />
<rect x="1653" y="1712.0" width="4" height="3" fill="#afb1b3" />
<rect x="1660" y="1712.0" width="14" height="3" fill="#afb1b3" />
<rect x="1653" y="1717.5" width="4" height="3" fill="#afb1b3" />
<rect x="1660" y="1717.5" width="14" height="3" fill="#afb1b3" />
<rect x="1653" y="1723.0" width="4" height="3" fill="#afb1b3" />
<rect x="1660" y="1723.0" width="14" height="3" fill="#afb1b3" />
<rect x="1653" y="1728.5" width="4" height="3" fill="#afb1b3" />
<rect x="1660" y="1728.5" width="14" height="3" fill="#afb1b3" />
<text x="1682.0" y="1731" font-size="22.5" fill="#bbbbbb" font-family="'Liberation Sans', sans-serif" textLength="92.1" lengthAdjust="spacingAndGlyphs" stroke="#bbbbbb" stroke-width="0.45" >6: TODO</text>
<rect x="1684" y="1734" width="13" height="2" fill="#bbbbbb" />
<circle cx="2696.6" cy="1722.8" r="13" fill="#499c54" />
<rect x="2696.6" y="1722.8" width="13" height="13" fill="#499c54" />
<text x="2696.6" y="1730" font-size="19" fill="#ffffff" font-family="'Liberation Sans', sans-serif" font-weight="bold" text-anchor="middle" stroke="#ffffff" stroke-width="0.45" >3</text>
<text x="2717.5" y="1731" font-size="22" fill="#bbbbbb" font-family="'Liberation Sans', sans-serif" textLength="100.4" lengthAdjust="spacingAndGlyphs" stroke="#bbbbbb" stroke-width="0.45" >Event Log</text>
<rect x="17" y="1755" width="18.5" height="18" fill="none" stroke="#b4b4b4" stroke-width="2"/>
<path d="M13 1758v19h19" fill="none" stroke="#b4b4b4" stroke-width="2" />
<text x="60.9" y="1774" font-size="21.5" fill="#bbbbbb" font-family="'Liberation Sans', sans-serif" textLength="409.4" lengthAdjust="spacingAndGlyphs" stroke="#bbbbbb" stroke-width="0.45" >All files are up-to-date (10 minutes ago)</text>
<text x="2268.3" y="1771.8" font-size="22.2" fill="#bbbbbb" font-family="'Liberation Sans', sans-serif" textLength="88.2" lengthAdjust="spacingAndGlyphs" stroke="#bbbbbb" stroke-width="0.45" >21 chars</text>
<text x="2384.3" y="1771.8" font-size="21.6" fill="#bbbbbb" font-family="'Liberation Sans', sans-serif" textLength="69.0" lengthAdjust="spacingAndGlyphs" stroke="#bbbbbb" stroke-width="0.45" >101:37</text>
<text x="2474.3" y="1771.8" font-size="22" fill="#7a7c7e" font-family="'Liberation Sans', sans-serif" textLength="27.0" lengthAdjust="spacingAndGlyphs" stroke="#7a7c7e" stroke-width="0.45" >LF</text>
<text x="2523.0" y="1771.8" font-size="22" fill="#7a7c7e" font-family="'Liberation Sans', sans-serif" textLength="67.5" lengthAdjust="spacingAndGlyphs" stroke="#7a7c7e" stroke-width="0.45" >UTF-8</text>
<text x="2613.0" y="1771.8" font-size="22.3" fill="#bbbbbb" font-family="'Liberation Sans', sans-serif" textLength="92.2" lengthAdjust="spacingAndGlyphs" stroke="#bbbbbb" stroke-width="0.45" >Git: main</text>
<rect x="2733" y="1750" width="15" height="11" fill="#5a5a5a" rx="3" />
<rect x="2728" y="1758" width="24" height="2.6" fill="#5a5a5a" />
<path d="M2731 1761h19v6c0 4-3 6-9.5 6c-6.5 0-9.5-2-9.5-6z" fill="#5a5a5a" />
<path d="M2729 1776l4-4h15l4 4z" fill="#5a5a5a" />
<circle cx="2787" cy="1761" r="9.5" fill="#b4b4b4" />
<circle cx="2778.5" cy="1764.5" r="6.5" fill="#b4b4b4" />
<circle cx="2796" cy="1765" r="6" fill="#b4b4b4" />
<rect x="2778.5" y="1764" width="18" height="7" fill="#b4b4b4" />
<text x="2787" y="1767.5" font-size="15" fill="#3c3f41" font-family="'Liberation Sans', sans-serif" font-weight="bold" text-anchor="middle" stroke="#3c3f41" stroke-width="0.45" >?</text>
<circle cx="2797" cy="1773" r="8.5" fill="#3c3f41" />
<circle cx="2797" cy="1773" r="4.08" fill="none" stroke="#b4b4b4" stroke-width="3.128" />
<line x1="2797.0" y1="1769.6" x2="2797.0" y2="1766.2" stroke="#b4b4b4" stroke-width="3.8080000000000003" />
<line x1="2799.94" y1="1771.3" x2="2802.89" y2="1769.6" stroke="#b4b4b4" stroke-width="3.8080000000000003" />
<line x1="2799.94" y1="1774.7" x2="2802.89" y2="1776.4" stroke="#b4b4b4" stroke-width="3.8080000000000003" />
<line x1="2797.0" y1="1776.4" x2="2797.0" y2="1779.8" stroke="#b4b4b4" stroke-width="3.8080000000000003" />
<line x1="2794.06" y1="1774.7" x2="2791.11" y2="1776.4" stroke="#b4b4b4" stroke-width="3.8080000000000003" />
<line x1="2794.06" y1="1771.3" x2="2791.11" y2="1769.6" stroke="#b4b4b4" stroke-width="3.8080000000000003" />
<path d="M2845 1750h-4a5 5 0 0 0 -5 5v6a5 5 0 0 0 5 5h4z" fill="#8d9ba3" />
<rect x="2845" y="1752" width="8" height="2.6" fill="#8d9ba3" />
<rect x="2845" y="1761.5" width="8" height="2.6" fill="#8d9ba3" />
<path d="M2838 1754c-6 1-11 5-11 12c0 6 5 11 13 11h5" fill="none" stroke="#8d9ba3" stroke-width="2" /></svg></body></html>
